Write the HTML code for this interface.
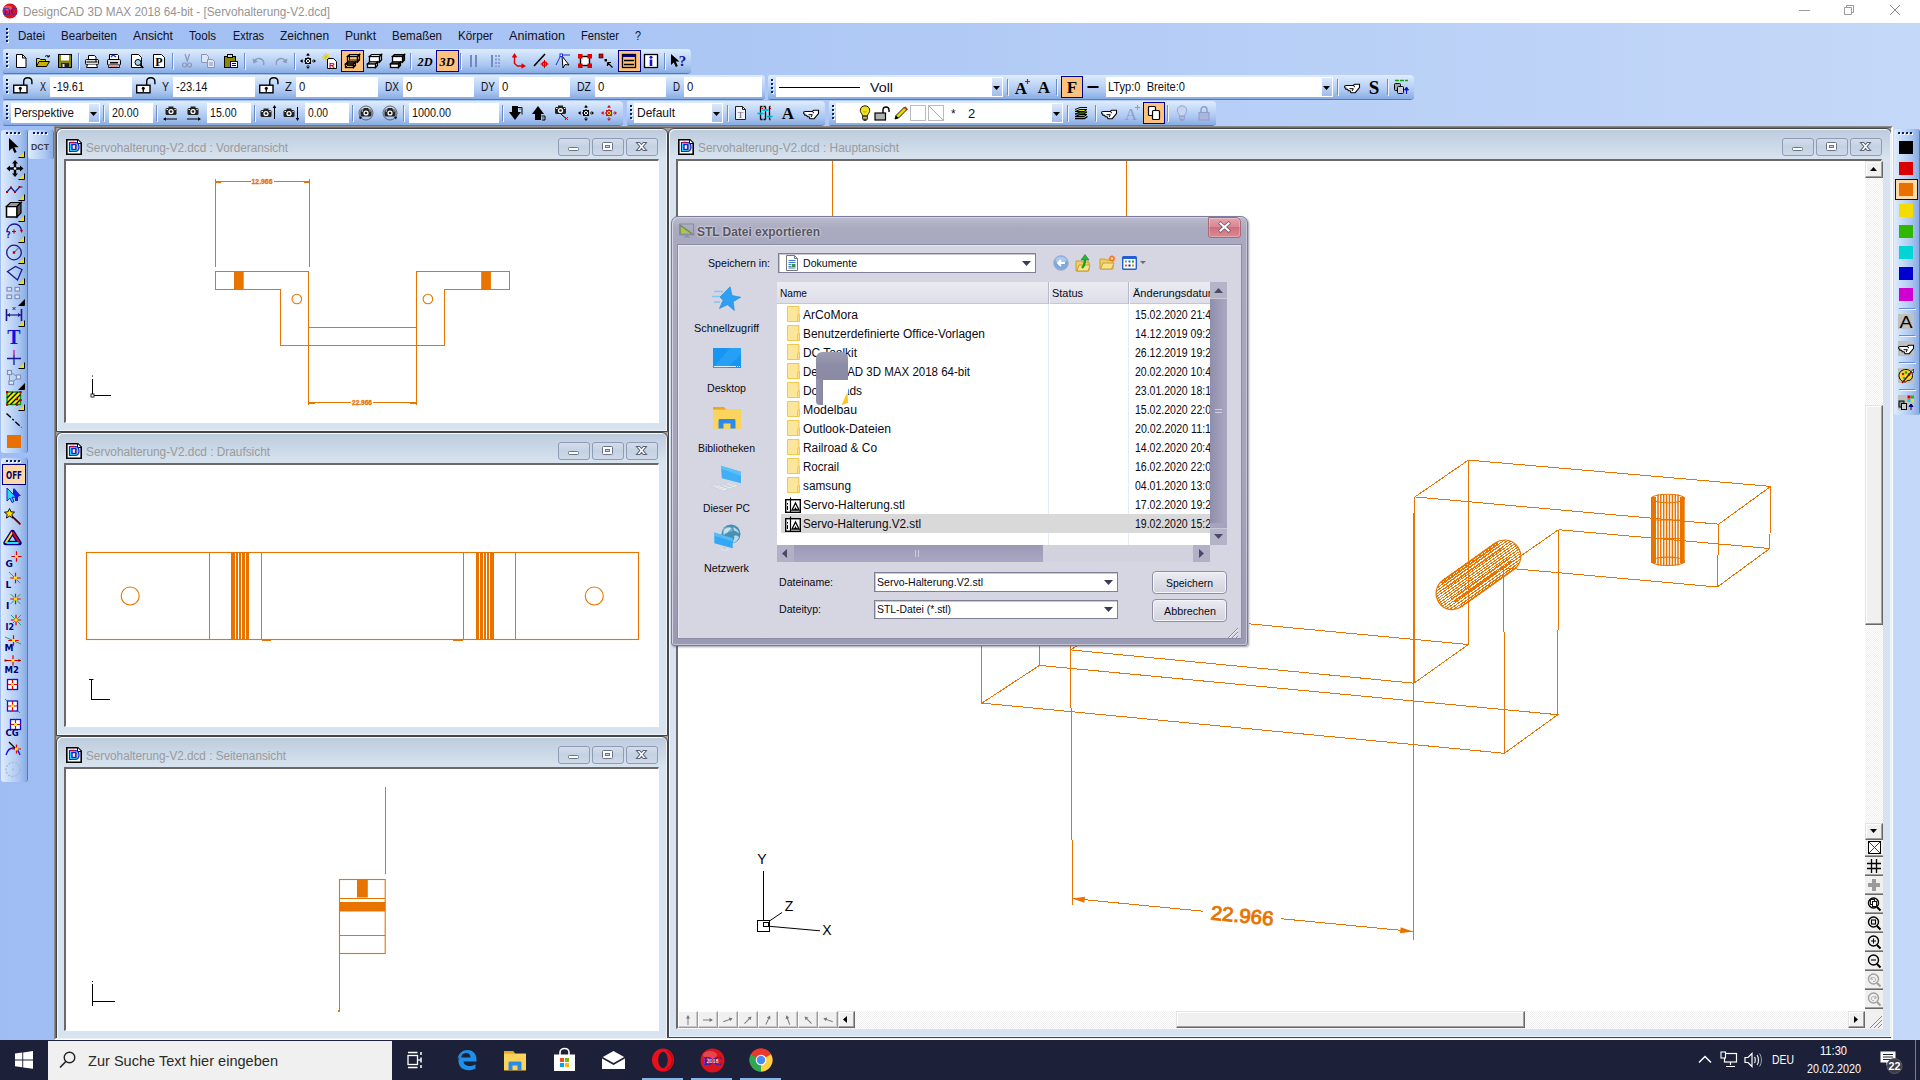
<!DOCTYPE html>
<html lang="de"><head><meta charset="utf-8"><title>DesignCAD 3D MAX 2018 64-bit - [Servohalterung-V2.dcd]</title>
<style>
html,body{margin:0;padding:0}
body{width:1920px;height:1080px;overflow:hidden;position:relative;font-family:"Liberation Sans",sans-serif;font-size:12px;
background:linear-gradient(90deg,#9fbdf3 0,#c4d8f8 100%)}
div,span.t,svg{position:absolute;box-sizing:border-box}
span.t{white-space:pre;transform-origin:0 50%;display:block}
svg{overflow:visible}
.tb{background:linear-gradient(180deg,#dfecfd 0,#c3d9f8 35%,#a9c5f0 70%,#86abe3 100%);border-radius:2px 4px 4px 2px;box-shadow:0 1px 0 #4e7ccb}
.tbv{background:linear-gradient(90deg,#dfecfd 0,#c3d9f8 35%,#a9c5f0 70%,#86abe3 100%);border-radius:3px;box-shadow:1px 0 0 #4e7ccb}
.sel{background:#ffc27c;border:1px solid #00008b}
.inp{background:#fff}
</style></head>
<body>
<!-- sec_chrome -->
<div style="left:0px;top:0px;width:1920px;height:23px;background:#fff"></div>
<svg style="left:2px;top:3px;" width="16" height="16" viewBox="0 0 16 16"><circle cx="8" cy="8" r="7.5" fill="#d8141c"/><ellipse cx="6" cy="5" rx="4" ry="2.5" fill="#f08080" opacity=".6"/><text x="8" y="11.500" font-size="10" font-family="Liberation Serif,serif" fill="#2a2ac8" text-anchor="middle" textLength="14" lengthAdjust="spacingAndGlyphs">DC</text></svg>
<span class="t" style="left:23px;top:3.5px;height:16px;line-height:16px;font-size:12px;color:#949494;transform:scaleX(0.9772);">DesignCAD 3D MAX 2018 64-bit - [Servohalterung-V2.dcd]</span>
<svg style="left:1780px;top:0px;" width="140" height="23" viewBox="0 0 140 23"><path d="M19 10.5h11" stroke="#9a9a9a" stroke-width="1" fill="none"/><path d="M64.5 7.5h7v7h-7z M66.5 7.5v-2h7v7h-2" stroke="#9a9a9a" stroke-width="1" fill="none"/><path d="M110 5l10 10M120 5l-10 10" stroke="#8a8a8a" stroke-width="1" fill="none"/></svg>
<svg style="left:6px;top:28px;" width="3" height="17" viewBox="0 0 3 17"><rect x="1" y="1" width="2" height="2" fill="#fff"/><rect x="0" y="0" width="2" height="2" fill="#0a1e6e"/><rect x="1" y="5" width="2" height="2" fill="#fff"/><rect x="0" y="4" width="2" height="2" fill="#0a1e6e"/><rect x="1" y="9" width="2" height="2" fill="#fff"/><rect x="0" y="8" width="2" height="2" fill="#0a1e6e"/><rect x="1" y="13" width="2" height="2" fill="#fff"/><rect x="0" y="12" width="2" height="2" fill="#0a1e6e"/></svg>
<span class="t" style="left:18px;top:27.5px;height:16px;line-height:16px;font-size:12px;color:#101020;transform:scaleX(0.9638);">Datei</span>
<span class="t" style="left:61px;top:27.5px;height:16px;line-height:16px;font-size:12px;color:#101020;transform:scaleX(0.9648);">Bearbeiten</span>
<span class="t" style="left:133px;top:27.5px;height:16px;line-height:16px;font-size:12px;color:#101020;transform:scaleX(1.0165);">Ansicht</span>
<span class="t" style="left:189px;top:27.5px;height:16px;line-height:16px;font-size:12px;color:#101020;transform:scaleX(0.9638);">Tools</span>
<span class="t" style="left:233px;top:27.5px;height:16px;line-height:16px;font-size:12px;color:#101020;transform:scaleX(0.9116);">Extras</span>
<span class="t" style="left:280px;top:27.5px;height:16px;line-height:16px;font-size:12px;color:#101020;transform:scaleX(0.9926);">Zeichnen</span>
<span class="t" style="left:345px;top:27.5px;height:16px;line-height:16px;font-size:12px;color:#101020;transform:scaleX(1.0102);">Punkt</span>
<span class="t" style="left:392px;top:27.5px;height:16px;line-height:16px;font-size:12px;color:#101020;transform:scaleX(0.9611);">Bemaßen</span>
<span class="t" style="left:458px;top:27.5px;height:16px;line-height:16px;font-size:12px;color:#101020;transform:scaleX(0.9717);">Körper</span>
<span class="t" style="left:509px;top:27.5px;height:16px;line-height:16px;font-size:12px;color:#101020;transform:scaleX(1.0494);">Animation</span>
<span class="t" style="left:581px;top:27.5px;height:16px;line-height:16px;font-size:12px;color:#101020;transform:scaleX(0.9341);">Fenster</span>
<span class="t" style="left:635px;top:27.5px;height:16px;line-height:16px;font-size:12px;color:#101020;transform:scaleX(0.8990);">?</span>
<div class="tb" style="left:3px;top:49px;width:688px;height:24px;"></div><svg style="left:6px;top:53px;" width="3" height="16" viewBox="0 0 3 16"><rect x="1" y="1" width="2" height="2" fill="#fff"/><rect x="0" y="0" width="2" height="2" fill="#0a1e6e"/><rect x="1" y="5" width="2" height="2" fill="#fff"/><rect x="0" y="4" width="2" height="2" fill="#0a1e6e"/><rect x="1" y="9" width="2" height="2" fill="#fff"/><rect x="0" y="8" width="2" height="2" fill="#0a1e6e"/><rect x="1" y="13" width="2" height="2" fill="#fff"/><rect x="0" y="12" width="2" height="2" fill="#0a1e6e"/></svg>
<svg style="left:13px;top:53px;" width="16" height="16" viewBox="0 0 16 16"><path d="M3.5 1.5h6l3.5 3.5v9.5h-9.5z" fill="#fff" stroke="#000"/><path d="M9.5 1.5v3.5h3.5" fill="none" stroke="#000"/></svg>
<svg style="left:35px;top:53px;" width="16" height="16" viewBox="0 0 16 16"><path d="M1.5 13.5v-8h3l1 1h5v2" fill="#e8d800" stroke="#000"/><path d="M1.5 13.5l2.5-5h10.5l-3 5z" fill="#c8b400" stroke="#000"/><path d="M10 3.5c1.5-1.5 3.5-1 4 .5m0 0l.3-2m-.3 2l-2-.3" stroke="#000" fill="none"/></svg>
<svg style="left:57px;top:53px;" width="16" height="16" viewBox="0 0 16 16"><rect x="1.5" y="1.5" width="13" height="13" fill="#8a8a00" stroke="#000"/><rect x="4" y="2" width="8" height="5.5" fill="#fff"/><rect x="4" y="10" width="8" height="4.5" fill="#222"/><rect x="5.5" y="11" width="2" height="3" fill="#ddd"/></svg>
<svg style="left:84px;top:53px;" width="16" height="16" viewBox="0 0 16 16"><path d="M4.5 6V2.5h6l1.500 1.5V6" fill="#fff" stroke="#000"/><rect x="1.500" y="6.500" width="13" height="5" rx="1" fill="#ddd" stroke="#000"/><path d="M3.500 11.500l-1 3h11l-1-3" fill="#fff" stroke="#000"/><path d="M2.500 9h11" stroke="#000"/><rect x="11" y="7.500" width="2" height="1" fill="#000"/></svg>
<svg style="left:106px;top:53px;" width="16" height="16" viewBox="0 0 16 16"><path d="M3.500 6V1.500h8l1 1V6" fill="#fff" stroke="#000"/><rect x="1.500" y="6.500" width="13" height="5.500" rx="1" fill="#ddd" stroke="#000"/><path d="M3 12l-.5 2.500h11l-.5-2.500" fill="#fff" stroke="#000"/><path d="M5 4l2-2 3 2" stroke="#1030e0" stroke-width="1.300" fill="none"/><rect x="4" y="12.500" width="8" height="1" fill="#e02020"/><rect x="4" y="9" width="8" height="1.500" fill="#000"/></svg>
<svg style="left:129px;top:53px;" width="16" height="16" viewBox="0 0 16 16"><path d="M2.500 1.500h7l3 3v10h-10z" fill="#fff" stroke="#000"/><circle cx="9" cy="9.500" r="3" fill="#9cd8f0" stroke="#000"/><path d="M11.200 11.700l3 3.300" stroke="#000" stroke-width="1.800"/></svg>
<svg style="left:151px;top:53px;" width="16" height="16" viewBox="0 0 16 16"><path d="M2.500 1.500h8l3 3v10h-11z" fill="#fff" stroke="#000"/><text x="8" y="13" font-size="12" font-weight="bold" font-family="Liberation Serif,serif" text-anchor="middle" fill="#000">P</text></svg>
<svg style="left:179px;top:53px;" width="16" height="16" viewBox="0 0 16 16"><path d="M6 1l2.500 8M10.500 1L8 9" stroke="#8a95b8" stroke-width="1.200" fill="none"/><circle cx="5.500" cy="12" r="2" fill="none" stroke="#8a95b8" stroke-width="1.200"/><circle cx="10.500" cy="12" r="2" fill="none" stroke="#8a95b8" stroke-width="1.200"/></svg>
<svg style="left:200px;top:53px;" width="16" height="16" viewBox="0 0 16 16"><path d="M1.500 1.500h5l2 2v6h-7z" fill="#dde6f5" stroke="#8a95b8"/><path d="M7.500 6.500h5l2 2v6h-7z" fill="#dde6f5" stroke="#8a95b8"/><path d="M9 10h4M9 12h4" stroke="#8a95b8"/></svg>
<svg style="left:223px;top:53px;" width="16" height="16" viewBox="0 0 16 16"><rect x="1.500" y="3.500" width="11" height="11" fill="#8a8a00" stroke="#000"/><rect x="4.500" y="1.500" width="5" height="3" fill="#ddd" stroke="#000"/><rect x="7.500" y="8.500" width="7" height="6" fill="#fff" stroke="#0000a0"/><path d="M9 10.500h4M9 12.500h4" stroke="#0000a0"/></svg>
<svg style="left:251px;top:53px;" width="16" height="16" viewBox="0 0 16 16"><path d="M3 9c1-3.500 6-5 9-1.500 1 1.500 1 3 .5 4.500" fill="none" stroke="#8a9ac0" stroke-width="1.400"/><path d="M1.500 5.500l1 5 4.500-2z" fill="#8a9ac0"/></svg>
<svg style="left:273px;top:53px;" width="16" height="16" viewBox="0 0 16 16"><path d="M13 9c-1-3.500-6-5-9-1.500-1 1.500-1 3-.5 4.500" fill="none" stroke="#8a9ac0" stroke-width="1.400"/><path d="M14.500 5.500l-1 5-4.500-2z" fill="#8a9ac0"/></svg>
<svg style="left:300px;top:53px;" width="16" height="16" viewBox="0 0 16 16"><path d="M8 0l2 2.500h-4zM8 16l2-2.500h-4zM0 8l2.500-2v4zM16 8l-2.500-2v4z" fill="#000"/><path d="M8 2v12M2 8h12" stroke="#000" stroke-dasharray="1 1"/><rect x="5.500" y="5.500" width="5" height="5" fill="#fff" stroke="#000"/><path d="M5.500 5.500l5 5M10.500 5.500l-5 5" stroke="#000" stroke-width=".8"/></svg>
<svg style="left:322px;top:53px;" width="16" height="16" viewBox="0 0 16 16"><path d="M5.500 5.500h6l3 3v7h-9z" fill="#fff" stroke="#000"/><text x="10" y="14.500" font-size="8" font-weight="bold" text-anchor="middle" fill="#e00000" font-family="Liberation Sans,sans-serif">R</text><path d="M4 0v8M0 4h8M1.200 1.200l5.600 5.600M6.800 1.200L1.200 6.800" stroke="#e8c800" stroke-width="1"/></svg>
<div style="left:78px;top:53px;width:1px;height:16px;background:#6a8ccb"></div><div style="left:79px;top:54px;width:1px;height:16px;background:#f0f6ff"></div>
<div style="left:172px;top:53px;width:1px;height:16px;background:#6a8ccb"></div><div style="left:173px;top:54px;width:1px;height:16px;background:#f0f6ff"></div>
<div style="left:244px;top:53px;width:1px;height:16px;background:#6a8ccb"></div><div style="left:245px;top:54px;width:1px;height:16px;background:#f0f6ff"></div>
<div style="left:294px;top:53px;width:1px;height:16px;background:#6a8ccb"></div><div style="left:295px;top:54px;width:1px;height:16px;background:#f0f6ff"></div>
<div style="left:410px;top:53px;width:1px;height:16px;background:#6a8ccb"></div><div style="left:411px;top:54px;width:1px;height:16px;background:#f0f6ff"></div>
<div style="left:460px;top:53px;width:1px;height:16px;background:#6a8ccb"></div><div style="left:461px;top:54px;width:1px;height:16px;background:#f0f6ff"></div>
<div style="left:664px;top:53px;width:1px;height:16px;background:#6a8ccb"></div><div style="left:665px;top:54px;width:1px;height:16px;background:#f0f6ff"></div>
<div class="sel" style="left:341px;top:50px;width:23px;height:22px;"></div>
<svg style="left:344px;top:53px;" width="16" height="16" viewBox="0 0 16 16"><path d="M3.5 3.5l2 -2h10l-2 2z" fill="none" stroke="#000" stroke-width="1.200"/><path d="M13.5 3.5l2 -2v5.5l-2 2z" fill="none" stroke="#000" stroke-width="1.200"/><rect x="3.5" y="3.5" width="10" height="5.5" fill="none" stroke="#000" stroke-width="1.300"/><path d="M3.5 9.0l2 -2h10M5.5 7.0v-5.5" fill="none" stroke="#000" stroke-width=".9"/><path d="M1.5 11l2 -2h8l-2 2z" fill="none" stroke="#000" stroke-width="1.200"/><path d="M9.5 11l2 -2v3.5l-2 2z" fill="none" stroke="#000" stroke-width="1.200"/><rect x="1.5" y="11" width="8" height="3.5" fill="none" stroke="#000" stroke-width="1.300"/><path d="M1.5 14.5l2 -2h8M3.5 12.5v-3.5" fill="none" stroke="#000" stroke-width=".9"/></svg>
<svg style="left:366px;top:53px;" width="16" height="16" viewBox="0 0 16 16"><path d="M3.5 3.5l2 -2h10l-2 2z" fill="#fff" stroke="#000" stroke-width="1.200"/><path d="M13.5 3.5l2 -2v5.5l-2 2z" fill="#fff" stroke="#000" stroke-width="1.200"/><rect x="3.5" y="3.5" width="10" height="5.5" fill="#fff" stroke="#000" stroke-width="1.300"/><path d="M1.5 11l2 -2h8l-2 2z" fill="#fff" stroke="#000" stroke-width="1.200"/><path d="M9.5 11l2 -2v3.5l-2 2z" fill="#fff" stroke="#000" stroke-width="1.200"/><rect x="1.5" y="11" width="8" height="3.5" fill="#fff" stroke="#000" stroke-width="1.300"/></svg>
<svg style="left:389px;top:53px;" width="16" height="16" viewBox="0 0 16 16"><path d="M3.5 3.5l2 -2h10l-2 2z" fill="#555" stroke="#000" stroke-width="1.200"/><path d="M13.5 3.5l2 -2v5.5l-2 2z" fill="#333" stroke="#000" stroke-width="1.200"/><rect x="3.5" y="3.5" width="10" height="5.5" fill="#fff" stroke="#000" stroke-width="1.300"/><path d="M1.5 11l2 -2h8l-2 2z" fill="#555" stroke="#000" stroke-width="1.200"/><path d="M9.5 11l2 -2v3.5l-2 2z" fill="#333" stroke="#000" stroke-width="1.200"/><rect x="1.5" y="11" width="8" height="3.5" fill="#fff" stroke="#000" stroke-width="1.300"/></svg>
<svg style="left:417px;top:53px;" width="16" height="16" viewBox="0 0 16 16"><text x="8" y="13" font-size="13" font-weight="bold" font-style="italic" font-family="Liberation Serif,serif" text-anchor="middle" fill="#000" textLength="15" lengthAdjust="spacingAndGlyphs">2D</text></svg>
<div class="sel" style="left:436px;top:50px;width:23px;height:22px;"></div>
<svg style="left:439px;top:53px;" width="16" height="16" viewBox="0 0 16 16"><text x="8" y="13" font-size="13" font-weight="bold" font-style="italic" font-family="Liberation Serif,serif" text-anchor="middle" fill="#000" textLength="15" lengthAdjust="spacingAndGlyphs">3D</text></svg>
<svg style="left:466px;top:53px;" width="16" height="16" viewBox="0 0 16 16"><path d="M5 2v12M10 2v12" stroke="#7088c4" stroke-width="2"/></svg>
<svg style="left:488px;top:53px;" width="16" height="16" viewBox="0 0 16 16"><path d="M4 2v12" stroke="#7088c4" stroke-width="2"/><path d="M8 2v12M11 2v12" stroke="#8496cc" stroke-width="1.800" stroke-dasharray="2 1.500"/></svg>
<svg style="left:510px;top:53px;" width="16" height="16" viewBox="0 0 16 16"><path d="M4.500 3v7.500l3 2.500h6" fill="none" stroke="#e00000" stroke-width="1.400"/><path d="M4.500 0l2.800 4.500h-5.600zM16 13l-4.500 2.800v-5.600z" fill="#e00000"/></svg>
<svg style="left:533px;top:53px;" width="16" height="16" viewBox="0 0 16 16"><path d="M1 13L12 1" stroke="#000" stroke-width="1.600"/><circle cx="11.500" cy="11" r="2.200" fill="none" stroke="#e00000" stroke-width="1.200"/><path d="M11.500 7v8M7.500 11h8" stroke="#e00000" stroke-width="1"/></svg>
<svg style="left:555px;top:53px;" width="16" height="16" viewBox="0 0 16 16"><path d="M7 3l7 9-4-.5-2 3.500z" fill="#fff" stroke="#000"/><path d="M1 12L6 2h9" fill="none" stroke="#2030d0" stroke-width="1"/><rect x="5" y="1" width="2.500" height="2.500" fill="#fff" stroke="#2030d0"/></svg>
<svg style="left:577px;top:53px;" width="16" height="16" viewBox="0 0 16 16"><rect x="3.500" y="3.500" width="9" height="9" fill="#fff" stroke="#000" stroke-width="1.400"/><rect x="1" y="1" width="4.500" height="4.500" fill="#e00000"/><rect x="10.500" y="1" width="4.500" height="4.500" fill="#e00000"/><rect x="1" y="10.500" width="4.500" height="4.500" fill="#e00000"/><rect x="10.500" y="10.500" width="4.500" height="4.500" fill="#e00000"/></svg>
<svg style="left:598px;top:53px;" width="16" height="16" viewBox="0 0 16 16"><rect x="1" y="1" width="4" height="4" fill="#e00000" stroke="#000" stroke-width=".6"/><rect x="6.500" y="6" width="2.500" height="2.500" fill="#000"/><path d="M9.500 9.500l5 5M9.500 9.500v3.500M9.500 9.500h3.500" stroke="#000" stroke-width="1.200" fill="none"/></svg>
<div class="sel" style="left:618px;top:50px;width:23px;height:22px;"></div>
<svg style="left:621px;top:53px;" width="16" height="16" viewBox="0 0 16 16"><rect x="1.500" y="1.500" width="13" height="13" fill="#ffc27c" stroke="#000" stroke-width="1.300"/><rect x="1.500" y="1.500" width="13" height="2.500" fill="#00008b"/><path d="M3 7.500h10M3 11.500h10" stroke="#000" stroke-width="1.600"/></svg>
<svg style="left:643px;top:53px;" width="16" height="16" viewBox="0 0 16 16"><rect x="1.500" y="1.500" width="13" height="13" fill="#fff" stroke="#000" stroke-width="1.300"/><rect x="6.700" y="6.500" width="2.600" height="6.500" fill="#1010e0"/><circle cx="8" cy="4.300" r="1.500" fill="#1010e0"/></svg>
<svg style="left:670px;top:53px;" width="16" height="16" viewBox="0 0 16 16"><path d="M1 1l0 11 2.800-2.600 2 4.600 2-1-2-4.400h3.700z" fill="#000"/><text x="12.500" y="12.500" font-size="15" font-weight="bold" font-family="Liberation Serif,serif" text-anchor="middle" fill="#101098">?</text></svg>
<div class="tb" style="left:3px;top:75px;width:762px;height:24px;"></div><svg style="left:6px;top:79px;" width="3" height="16" viewBox="0 0 3 16"><rect x="1" y="1" width="2" height="2" fill="#fff"/><rect x="0" y="0" width="2" height="2" fill="#0a1e6e"/><rect x="1" y="5" width="2" height="2" fill="#fff"/><rect x="0" y="4" width="2" height="2" fill="#0a1e6e"/><rect x="1" y="9" width="2" height="2" fill="#fff"/><rect x="0" y="8" width="2" height="2" fill="#0a1e6e"/><rect x="1" y="13" width="2" height="2" fill="#fff"/><rect x="0" y="12" width="2" height="2" fill="#0a1e6e"/></svg>
<svg style="left:13px;top:77px;" width="20" height="17" viewBox="0 0 20 17"><rect x=".7" y="8.200" width="13.300" height="7.600" fill="#fff" stroke="#000" stroke-width="1.400"/><path d="M10.700 8V4.600c0-2.600 1.500-3.800 4.100-3.800s4.100 1.200 4.100 3.800V7.200" fill="none" stroke="#000" stroke-width="1.400"/><circle cx="7.300" cy="11.200" r="1.500" fill="#000"/><rect x="6.600" y="11.500" width="1.400" height="3.300" fill="#000"/></svg>
<span class="t" style="left:40px;top:79.0px;height:16px;line-height:16px;font-size:12px;color:#101020;transform:scaleX(0.7496);">X</span>
<div style="left:50px;top:77px;width:82px;height:20px;background:#fff"></div>
<span class="t" style="left:53px;top:79.0px;height:16px;line-height:16px;font-size:12px;color:#101020;transform:scaleX(0.9111);">-19.61</span>
<svg style="left:136px;top:77px;" width="20" height="17" viewBox="0 0 20 17"><rect x=".7" y="8.200" width="13.300" height="7.600" fill="#fff" stroke="#000" stroke-width="1.400"/><path d="M10.700 8V4.600c0-2.600 1.500-3.800 4.100-3.800s4.100 1.200 4.100 3.800V7.200" fill="none" stroke="#000" stroke-width="1.400"/><circle cx="7.300" cy="11.200" r="1.500" fill="#000"/><rect x="6.600" y="11.500" width="1.400" height="3.300" fill="#000"/></svg>
<span class="t" style="left:162px;top:79.0px;height:16px;line-height:16px;font-size:12px;color:#101020;transform:scaleX(0.8746);">Y</span>
<div style="left:173px;top:77px;width:82px;height:20px;background:#fff"></div>
<span class="t" style="left:176px;top:79.0px;height:16px;line-height:16px;font-size:12px;color:#101020;transform:scaleX(0.9258);">-23.14</span>
<svg style="left:259px;top:77px;" width="20" height="17" viewBox="0 0 20 17"><rect x=".7" y="8.200" width="13.300" height="7.600" fill="#fff" stroke="#000" stroke-width="1.400"/><path d="M10.700 8V4.600c0-2.600 1.500-3.800 4.100-3.800s4.100 1.200 4.100 3.800V7.200" fill="none" stroke="#000" stroke-width="1.400"/><circle cx="7.300" cy="11.200" r="1.500" fill="#000"/><rect x="6.600" y="11.500" width="1.400" height="3.300" fill="#000"/></svg>
<span class="t" style="left:285px;top:79.0px;height:16px;line-height:16px;font-size:12px;color:#101020;transform:scaleX(0.9550);">Z</span>
<div style="left:296px;top:77px;width:82px;height:20px;background:#fff"></div>
<span class="t" style="left:299px;top:79.0px;height:16px;line-height:16px;font-size:12px;color:#101020;transform:scaleX(0.9440);">0</span>
<span class="t" style="left:385px;top:79.0px;height:16px;line-height:16px;font-size:12px;color:#101020;transform:scaleX(0.8398);">DX</span>
<div style="left:403px;top:77px;width:71px;height:20px;background:#fff"></div>
<span class="t" style="left:406px;top:79.0px;height:16px;line-height:16px;font-size:12px;color:#101020;transform:scaleX(0.9440);">0</span>
<span class="t" style="left:481px;top:79.0px;height:16px;line-height:16px;font-size:12px;color:#101020;transform:scaleX(0.8398);">DY</span>
<div style="left:499px;top:77px;width:71px;height:20px;background:#fff"></div>
<span class="t" style="left:502px;top:79.0px;height:16px;line-height:16px;font-size:12px;color:#101020;transform:scaleX(0.9440);">0</span>
<span class="t" style="left:577px;top:79.0px;height:16px;line-height:16px;font-size:12px;color:#101020;transform:scaleX(0.8752);">DZ</span>
<div style="left:595px;top:77px;width:71px;height:20px;background:#fff"></div>
<span class="t" style="left:598px;top:79.0px;height:16px;line-height:16px;font-size:12px;color:#101020;transform:scaleX(0.9440);">0</span>
<span class="t" style="left:673px;top:79.0px;height:16px;line-height:16px;font-size:12px;color:#101020;transform:scaleX(0.8078);">D</span>
<div style="left:684px;top:77px;width:78px;height:20px;background:#fff"></div>
<span class="t" style="left:687px;top:79.0px;height:16px;line-height:16px;font-size:12px;color:#101020;transform:scaleX(0.9440);">0</span>
<div class="tb" style="left:768px;top:75px;width:646px;height:24px;"></div><svg style="left:771px;top:79px;" width="3" height="16" viewBox="0 0 3 16"><rect x="1" y="1" width="2" height="2" fill="#fff"/><rect x="0" y="0" width="2" height="2" fill="#0a1e6e"/><rect x="1" y="5" width="2" height="2" fill="#fff"/><rect x="0" y="4" width="2" height="2" fill="#0a1e6e"/><rect x="1" y="9" width="2" height="2" fill="#fff"/><rect x="0" y="8" width="2" height="2" fill="#0a1e6e"/><rect x="1" y="13" width="2" height="2" fill="#fff"/><rect x="0" y="12" width="2" height="2" fill="#0a1e6e"/></svg>
<div style="left:776px;top:77px;width:227px;height:20px;background:#fff"></div><div style="left:991px;top:78px;width:11px;height:18px;background:linear-gradient(180deg,#dce8fb,#9fbdee);border-left:1px solid #fff"></div><svg style="left:993px;top:86px;" width="7" height="4" viewBox="0 0 7 4"><path d="M0 0h7l-3.500 4z" fill="#000"/></svg>
<div style="left:779px;top:87px;width:81px;height:1px;background:#000"></div>
<span class="t" style="left:870px;top:79.0px;height:17px;line-height:17px;font-size:13px;color:#101020;transform:scaleX(1.0972);">Voll</span>
<div style="left:1007px;top:79px;width:1px;height:16px;background:#6a8ccb"></div><div style="left:1008px;top:80px;width:1px;height:16px;background:#f0f6ff"></div>
<svg style="left:1014px;top:79px;" width="16" height="16" viewBox="0 0 16 16"><text x="7" y="14.500" font-size="17" font-weight="bold" font-family="Liberation Serif,serif" text-anchor="middle" fill="#000">A</text><path d="M11 2.500h5M13.500 0v5" stroke="#e00000" stroke-width="1.200"/></svg>
<svg style="left:1036px;top:79px;" width="16" height="16" viewBox="0 0 16 16"><text x="8" y="14" font-size="17" font-weight="bold" font-family="Liberation Serif,serif" text-anchor="middle" fill="#000">A</text></svg>
<div style="left:1056px;top:79px;width:1px;height:16px;background:#6a8ccb"></div><div style="left:1057px;top:80px;width:1px;height:16px;background:#f0f6ff"></div>
<div class="sel" style="left:1061px;top:76px;width:22px;height:22px;"></div>
<svg style="left:1064px;top:79px;" width="16" height="16" viewBox="0 0 16 16"><text x="8" y="14" font-size="17" font-weight="bold" font-family="Liberation Serif,serif" text-anchor="middle" fill="#000">F</text></svg>
<svg style="left:1085px;top:79px;" width="16" height="16" viewBox="0 0 16 16"><rect x="2.500" y="7" width="11" height="2" fill="#000"/></svg>
<div style="left:1106px;top:77px;width:227px;height:20px;background:#fff"></div><div style="left:1321px;top:78px;width:11px;height:18px;background:linear-gradient(180deg,#dce8fb,#9fbdee);border-left:1px solid #fff"></div><svg style="left:1323px;top:86px;" width="7" height="4" viewBox="0 0 7 4"><path d="M0 0h7l-3.500 4z" fill="#000"/></svg>
<span class="t" style="left:1108px;top:79.0px;height:16px;line-height:16px;font-size:12px;color:#101020;transform:scaleX(0.9260);">LTyp:0  Breite:0</span>
<div style="left:1337px;top:79px;width:1px;height:16px;background:#6a8ccb"></div><div style="left:1338px;top:80px;width:1px;height:16px;background:#f0f6ff"></div>
<svg style="left:1344px;top:80px;" width="16" height="16" viewBox="0 0 16 16"><path d="M.6 6.800c0-.9.500-1.300 1.400-1.300h7.200l1.600-1.300h4.700v3.300l-4.300 5.200h-4.200l-1-2h-1.700l-.6-1.500h-1.900v-1.200h-.7c-.4 0-.5-.4-.5-1.200z" fill="#fff" stroke="#000" stroke-width="1.100"/><path d="M5.500 8.700h3.800l-1.300 2.500M9.200 5.600l1.800 1.500" fill="none" stroke="#000" stroke-width="1"/></svg>
<svg style="left:1366px;top:79px;" width="16" height="16" viewBox="0 0 16 16"><text x="8" y="14.500" font-size="19" font-weight="bold" font-family="Liberation Serif,serif" text-anchor="middle" fill="#000">S</text></svg>
<div style="left:1387px;top:79px;width:1px;height:16px;background:#6a8ccb"></div><div style="left:1388px;top:80px;width:1px;height:16px;background:#f0f6ff"></div>
<svg style="left:1393px;top:79px;" width="16" height="16" viewBox="0 0 16 16"><rect x="1.500" y="4.500" width="6" height="7" rx="1" fill="#9aa" stroke="#000"/><rect x="4.500" y="7.500" width="6" height="7" rx="1" fill="#ccd" stroke="#000"/><path d="M2 1.500h4M7 1.500h4M12 1.500h3" stroke="#10a010" stroke-width="1.600"/><path d="M13.500 15V10M13.500 8l-2 3h4z" stroke="#1010d0" fill="#1010d0"/></svg>
<div class="tb" style="left:3px;top:101px;width:620px;height:24px;"></div><svg style="left:6px;top:105px;" width="3" height="16" viewBox="0 0 3 16"><rect x="1" y="1" width="2" height="2" fill="#fff"/><rect x="0" y="0" width="2" height="2" fill="#0a1e6e"/><rect x="1" y="5" width="2" height="2" fill="#fff"/><rect x="0" y="4" width="2" height="2" fill="#0a1e6e"/><rect x="1" y="9" width="2" height="2" fill="#fff"/><rect x="0" y="8" width="2" height="2" fill="#0a1e6e"/><rect x="1" y="13" width="2" height="2" fill="#fff"/><rect x="0" y="12" width="2" height="2" fill="#0a1e6e"/></svg>
<div style="left:11px;top:103px;width:89px;height:20px;background:#fff"></div><div style="left:88px;top:104px;width:11px;height:18px;background:linear-gradient(180deg,#dce8fb,#9fbdee);border-left:1px solid #fff"></div><svg style="left:90px;top:112px;" width="7" height="4" viewBox="0 0 7 4"><path d="M0 0h7l-3.500 4z" fill="#000"/></svg>
<span class="t" style="left:14px;top:105.0px;height:16px;line-height:16px;font-size:12px;color:#101020;transform:scaleX(0.9570);">Perspektive</span>
<div style="left:103px;top:105px;width:1px;height:16px;background:#6a8ccb"></div><div style="left:104px;top:106px;width:1px;height:16px;background:#f0f6ff"></div>
<div style="left:109px;top:103px;width:44px;height:20px;background:#fff"></div>
<span class="t" style="left:112px;top:105.0px;height:16px;line-height:16px;font-size:12px;color:#101020;transform:scaleX(0.8858);">20.00</span>
<div style="left:207px;top:103px;width:44px;height:20px;background:#fff"></div>
<span class="t" style="left:210px;top:105.0px;height:16px;line-height:16px;font-size:12px;color:#101020;transform:scaleX(0.8858);">15.00</span>
<div style="left:305px;top:103px;width:44px;height:20px;background:#fff"></div>
<span class="t" style="left:308px;top:105.0px;height:16px;line-height:16px;font-size:12px;color:#101020;transform:scaleX(0.8563);">0.00</span>
<div style="left:409px;top:103px;width:90px;height:20px;background:#fff"></div>
<span class="t" style="left:412px;top:105.0px;height:16px;line-height:16px;font-size:12px;color:#101020;transform:scaleX(0.8991);">1000.00</span>
<div style="left:156px;top:105px;width:1px;height:16px;background:#6a8ccb"></div><div style="left:157px;top:106px;width:1px;height:16px;background:#f0f6ff"></div>
<div style="left:254px;top:105px;width:1px;height:16px;background:#6a8ccb"></div><div style="left:255px;top:106px;width:1px;height:16px;background:#f0f6ff"></div>
<div style="left:352px;top:105px;width:1px;height:16px;background:#6a8ccb"></div><div style="left:353px;top:106px;width:1px;height:16px;background:#f0f6ff"></div>
<div style="left:403px;top:105px;width:1px;height:16px;background:#6a8ccb"></div><div style="left:404px;top:106px;width:1px;height:16px;background:#f0f6ff"></div>
<div style="left:502px;top:105px;width:1px;height:16px;background:#6a8ccb"></div><div style="left:503px;top:106px;width:1px;height:16px;background:#f0f6ff"></div>
<svg style="left:163px;top:105px;" width="16" height="16" viewBox="0 0 16 16"><g transform="translate(0.5,-2)"><rect x="2" y="5" width="11" height="7" rx="1.5" fill="#222"/><rect x="5" y="3.5" width="5" height="2" fill="#222"/><circle cx="7.5" cy="8.5" r="2.6" fill="#fff"/><circle cx="7.5" cy="8.5" r="1.3" fill="#222"/><rect x="3" y="6" width="1.5" height="1" fill="#fff"/><rect x="11" y="6" width="1.2" height="1" fill="#fff"/></g><path d="M1 14h13" stroke="#000"/><path d="M0 14l3-1.800v3.600z" fill="#000"/></svg>
<svg style="left:185px;top:105px;" width="16" height="16" viewBox="0 0 16 16"><g transform="translate(0.5,-2)"><rect x="2" y="5" width="11" height="7" rx="1.5" fill="#222"/><rect x="5" y="3.5" width="5" height="2" fill="#222"/><circle cx="7.5" cy="8.5" r="2.6" fill="#fff"/><circle cx="7.5" cy="8.5" r="1.3" fill="#222"/><rect x="3" y="6" width="1.5" height="1" fill="#fff"/><rect x="11" y="6" width="1.2" height="1" fill="#fff"/></g><path d="M2 14h13" stroke="#000"/><path d="M16 14l-3-1.800v3.600z" fill="#000"/></svg>
<svg style="left:260px;top:105px;" width="16" height="16" viewBox="0 0 16 16"><g transform="translate(-1.5,0)"><rect x="2" y="5" width="11" height="7" rx="1.5" fill="#222"/><rect x="5" y="3.5" width="5" height="2" fill="#222"/><circle cx="7.5" cy="8.5" r="2.6" fill="#fff"/><circle cx="7.5" cy="8.5" r="1.3" fill="#222"/><rect x="3" y="6" width="1.5" height="1" fill="#fff"/><rect x="11" y="6" width="1.2" height="1" fill="#fff"/></g><path d="M14.500 14V2" stroke="#000"/><path d="M14.500 0l-1.800 3h3.600z" fill="#000"/></svg>
<svg style="left:283px;top:105px;" width="16" height="16" viewBox="0 0 16 16"><g transform="translate(-1.5,0)"><rect x="2" y="5" width="11" height="7" rx="1.5" fill="#222"/><rect x="5" y="3.5" width="5" height="2" fill="#222"/><circle cx="7.5" cy="8.5" r="2.6" fill="#fff"/><circle cx="7.5" cy="8.5" r="1.3" fill="#222"/><rect x="3" y="6" width="1.5" height="1" fill="#fff"/><rect x="11" y="6" width="1.2" height="1" fill="#fff"/></g><path d="M14.500 2v12" stroke="#000"/><path d="M14.500 16l-1.800-3h3.600z" fill="#000"/></svg>
<svg style="left:358px;top:105px;" width="16" height="16" viewBox="0 0 16 16"><circle cx="8" cy="8" r="7" fill="none" stroke="#555" stroke-width=".9"/><g transform="translate(0.5,-0.5)"><rect x="2" y="5" width="11" height="7" rx="1.5" fill="#222"/><rect x="5" y="3.5" width="5" height="2" fill="#222"/><circle cx="7.5" cy="8.5" r="2.6" fill="#fff"/><circle cx="7.5" cy="8.5" r="1.3" fill="#222"/><rect x="3" y="6" width="1.5" height="1" fill="#fff"/><rect x="11" y="6" width="1.2" height="1" fill="#fff"/></g><path d="M1 11.500l3 .5-2 2.500z" fill="#000"/></svg>
<svg style="left:382px;top:105px;" width="16" height="16" viewBox="0 0 16 16"><circle cx="8" cy="8" r="7" fill="none" stroke="#555" stroke-width=".9"/><g transform="translate(0.5,-0.5)"><rect x="2" y="5" width="11" height="7" rx="1.5" fill="#222"/><rect x="5" y="3.5" width="5" height="2" fill="#222"/><circle cx="7.5" cy="8.5" r="2.6" fill="#fff"/><circle cx="7.5" cy="8.5" r="1.3" fill="#222"/><rect x="3" y="6" width="1.5" height="1" fill="#fff"/><rect x="11" y="6" width="1.2" height="1" fill="#fff"/></g><path d="M15 11.500l-3 .5 2 2.500z" fill="#000"/></svg>
<svg style="left:508px;top:105px;" width="16" height="16" viewBox="0 0 16 16"><path d="M4 1h6v6h3l-6 8-6-8h3z" fill="#000"/><path d="M10 2.500h4v7M11.500 4h1" stroke="#000" fill="none"/></svg>
<svg style="left:531px;top:105px;" width="16" height="16" viewBox="0 0 16 16"><path d="M4 15h6V9h3L7 1 1 9h3z" fill="#000"/><path d="M10.500 11h3.500v4h-3" stroke="#000" fill="none"/><path d="M11 13h4" stroke="#555"/></svg>
<svg style="left:553px;top:105px;" width="16" height="16" viewBox="0 0 16 16"><g transform="translate(0,-3)"><rect x="2" y="5" width="11" height="7" rx="1.5" fill="#222"/><rect x="5" y="3.5" width="5" height="2" fill="#222"/><circle cx="7.5" cy="8.5" r="2.6" fill="#fff"/><circle cx="7.5" cy="8.5" r="1.3" fill="#222"/><rect x="3" y="6" width="1.5" height="1" fill="#fff"/><rect x="11" y="6" width="1.2" height="1" fill="#fff"/></g><path d="M8 9l5 4.500" stroke="#000"/><path d="M12 12l3 3M15 12l-3 3" stroke="#e00000" stroke-width="1"/></svg>
<svg style="left:578px;top:105px;" width="16" height="16" viewBox="0 0 16 16"><path d="M8 0l2 2.500h-4zM8 16l2-2.500h-4zM0 8l2.500-2v4zM16 8l-2.500-2v4z" fill="#000"/><path d="M8 2v12M2 8h12" stroke="#000" stroke-dasharray="1 1"/><rect x="5.500" y="5.500" width="5" height="5" fill="#fff" stroke="#000"/><path d="M5.500 5.500l5 5M10.500 5.500l-5 5" stroke="#000" stroke-width=".8"/></svg>
<svg style="left:601px;top:105px;" width="16" height="16" viewBox="0 0 16 16"><path d="M8 0l2 2.500h-4zM8 16l2-2.500h-4zM0 8l2.500-2v4zM16 8l-2.500-2v4z" fill="#d01010"/><path d="M8 2v12M2 8h12" stroke="#d01010" stroke-dasharray="1 1"/><rect x="5.500" y="5.500" width="5" height="5" fill="#ffe000" stroke="#d01010"/><path d="M5.500 5.500l5 5M10.500 5.500l-5 5" stroke="#d01010" stroke-width=".8"/></svg>
<div class="tb" style="left:627px;top:101px;width:198px;height:24px;"></div><svg style="left:630px;top:105px;" width="3" height="16" viewBox="0 0 3 16"><rect x="1" y="1" width="2" height="2" fill="#fff"/><rect x="0" y="0" width="2" height="2" fill="#0a1e6e"/><rect x="1" y="5" width="2" height="2" fill="#fff"/><rect x="0" y="4" width="2" height="2" fill="#0a1e6e"/><rect x="1" y="9" width="2" height="2" fill="#fff"/><rect x="0" y="8" width="2" height="2" fill="#0a1e6e"/><rect x="1" y="13" width="2" height="2" fill="#fff"/><rect x="0" y="12" width="2" height="2" fill="#0a1e6e"/></svg>
<div style="left:634px;top:103px;width:89px;height:20px;background:#fff"></div><div style="left:711px;top:104px;width:11px;height:18px;background:linear-gradient(180deg,#dce8fb,#9fbdee);border-left:1px solid #fff"></div><svg style="left:713px;top:112px;" width="7" height="4" viewBox="0 0 7 4"><path d="M0 0h7l-3.500 4z" fill="#000"/></svg>
<span class="t" style="left:637px;top:105.0px;height:16px;line-height:16px;font-size:12px;color:#101020;transform:scaleX(0.9994);">Default</span>
<div style="left:727px;top:105px;width:1px;height:16px;background:#6a8ccb"></div><div style="left:728px;top:106px;width:1px;height:16px;background:#f0f6ff"></div>
<svg style="left:733px;top:105px;" width="16" height="16" viewBox="0 0 16 16"><path d="M2.500 1.500h7l3 3v10h-10z" fill="#eef2fa" stroke="#222"/><path d="M9.500 1.500v3h3" fill="none" stroke="#222"/><text x="7.500" y="13" font-size="9" font-family="Liberation Serif,serif" text-anchor="middle" fill="#556">T</text></svg>
<svg style="left:757px;top:105px;" width="16" height="16" viewBox="0 0 16 16"><path d="M3.500 1.500v13M8.500 1.500v13M12.500 1.500v13M3.500 1.500h2M3.500 14.500h2M8.500 1.500h-2M8.500 14.500h-2M12.500 1.500h1M12.500 14.500h1" stroke="#000" stroke-width="1.300" fill="none"/><path d="M4.500 3.500h1.500M13 3.500h1" stroke="#e00000" stroke-width="1.200"/><path d="M1 8.500h5M6 5h5M10 11.500h5" stroke="#00d8e8" stroke-width="2" stroke-linecap="round"/><path d="M1.500 8.500h4M6.500 5h4M10.500 11.500h4" stroke="#000" stroke-width=".5" fill="none" opacity=".5"/></svg>
<svg style="left:780px;top:105px;" width="16" height="16" viewBox="0 0 16 16"><text x="8" y="14" font-size="17" font-weight="bold" font-family="Liberation Serif,serif" text-anchor="middle" fill="#000">A</text></svg>
<svg style="left:803px;top:106px;" width="16" height="16" viewBox="0 0 16 16"><path d="M.6 6.800c0-.9.500-1.300 1.400-1.300h7.200l1.600-1.300h4.700v3.300l-4.300 5.200h-4.200l-1-2h-1.700l-.6-1.500h-1.900v-1.200h-.7c-.4 0-.5-.4-.5-1.200z" fill="#fff" stroke="#000" stroke-width="1.100"/><path d="M5.500 8.700h3.800l-1.300 2.500M9.200 5.600l1.800 1.500" fill="none" stroke="#000" stroke-width="1"/></svg>
<div class="tb" style="left:829px;top:101px;width:387px;height:24px;"></div><svg style="left:832px;top:105px;" width="3" height="16" viewBox="0 0 3 16"><rect x="1" y="1" width="2" height="2" fill="#fff"/><rect x="0" y="0" width="2" height="2" fill="#0a1e6e"/><rect x="1" y="5" width="2" height="2" fill="#fff"/><rect x="0" y="4" width="2" height="2" fill="#0a1e6e"/><rect x="1" y="9" width="2" height="2" fill="#fff"/><rect x="0" y="8" width="2" height="2" fill="#0a1e6e"/><rect x="1" y="13" width="2" height="2" fill="#fff"/><rect x="0" y="12" width="2" height="2" fill="#0a1e6e"/></svg>
<div style="left:836px;top:103px;width:227px;height:20px;background:#fff"></div><div style="left:1051px;top:104px;width:11px;height:18px;background:linear-gradient(180deg,#dce8fb,#9fbdee);border-left:1px solid #fff"></div><svg style="left:1053px;top:112px;" width="7" height="4" viewBox="0 0 7 4"><path d="M0 0h7l-3.500 4z" fill="#000"/></svg>
<svg style="left:857px;top:105px;" width="16" height="16" viewBox="0 0 16 16"><path d="M8 .8c-3 0-4.700 2.200-4.700 4.500 0 2 1.200 3 1.800 4.200.3.700.4 1.500.4 1.500h5s.1-.8.400-1.500c.6-1.200 1.800-2.200 1.800-4.200C12.700 3 11 .8 8 .8z" fill="#f0e020" stroke="#000" stroke-width=".9"/><rect x="5.700" y="11.200" width="4.600" height="3" fill="#c8c060" stroke="#000" stroke-width=".8"/><path d="M6.500 15.200h3" stroke="#000" stroke-width="1.200"/><path d="M6.500 6l1.500 1.500L9.500 6" fill="none" stroke="#a08000" stroke-width=".7"/></svg>
<svg style="left:874px;top:105px;" width="16" height="16" viewBox="0 0 16 16"><rect x="1" y="8" width="10.500" height="7" fill="#b0b0b0" stroke="#000" stroke-width="1.200"/><path d="M9 8V5c0-2 1.200-3 3-3s3 1 3 3v2" fill="none" stroke="#000" stroke-width="1.400"/></svg>
<svg style="left:893px;top:105px;" width="16" height="16" viewBox="0 0 16 16"><path d="M2 14l1-3.500L11.500 2l2.500 2.500L5.500 13z" fill="#e8d800" stroke="#000" stroke-width=".9"/><path d="M2 14l1-3.500 2.500 2.500z" fill="#000"/><path d="M11.500 2l2.500 2.500" stroke="#c03030" stroke-width="2"/></svg>
<svg style="left:910px;top:105px;" width="16" height="16" viewBox="0 0 16 16"><rect x=".5" y=".5" width="15" height="15" fill="#fff" stroke="#bbb"/></svg>
<svg style="left:928px;top:105px;" width="16" height="16" viewBox="0 0 16 16"><rect x=".5" y=".5" width="15" height="15" fill="#fff" stroke="#bbb"/><path d="M1 1l14 14" stroke="#aaa"/></svg>
<span class="t" style="left:951px;top:106.0px;height:16px;line-height:16px;font-size:12px;color:#101020;">*</span>
<span class="t" style="left:968px;top:105.0px;height:17px;line-height:17px;font-size:13px;color:#101020;">2</span>
<div style="left:1067px;top:105px;width:1px;height:16px;background:#6a8ccb"></div><div style="left:1068px;top:106px;width:1px;height:16px;background:#f0f6ff"></div>
<svg style="left:1073px;top:105px;" width="16" height="16" viewBox="0 0 16 16"><path d="M2 11.500l5-2h7l-3 2z" fill="#20c0e0" stroke="#000"/><path d="M2 9l5-2h7l-3 2z" fill="#30b030" stroke="#000"/><path d="M2 6.500l5-2h7l-3 2z" fill="#e8e000" stroke="#000"/><path d="M2 13.500h9.500l3-2" fill="none" stroke="#000" stroke-width="1.300"/><path d="M2 4.500l5-2h7" fill="none" stroke="#000"/></svg>
<div style="left:1095px;top:105px;width:1px;height:16px;background:#6a8ccb"></div><div style="left:1096px;top:106px;width:1px;height:16px;background:#f0f6ff"></div>
<svg style="left:1101px;top:106px;" width="16" height="16" viewBox="0 0 16 16"><path d="M.6 6.800c0-.9.500-1.300 1.400-1.300h7.200l1.600-1.300h4.700v3.300l-4.300 5.200h-4.200l-1-2h-1.700l-.6-1.500h-1.900v-1.200h-.7c-.4 0-.5-.4-.5-1.200z" fill="#fff" stroke="#000" stroke-width="1.100"/><path d="M5.500 8.700h3.800l-1.300 2.500M9.200 5.600l1.800 1.500" fill="none" stroke="#000" stroke-width="1"/></svg>
<svg style="left:1124px;top:105px;" width="16" height="16" viewBox="0 0 16 16"><text x="7" y="14.500" font-size="17" font-family="Liberation Serif,serif" text-anchor="middle" fill="#8e9cc8">A</text><path d="M11 2.500h5M13.500 0v5" stroke="#8e9cc8" stroke-width="1"/></svg>
<div class="sel" style="left:1143px;top:102px;width:22px;height:22px;"></div>
<svg style="left:1146px;top:105px;" width="16" height="16" viewBox="0 0 16 16"><rect x="2.500" y="1.500" width="7" height="9" rx="1" fill="#fff" stroke="#000" stroke-width="1.200"/><rect x="6.500" y="5.500" width="7" height="9" rx="1" fill="#fff" stroke="#000" stroke-width="1.200"/></svg>
<div style="left:1167px;top:105px;width:1px;height:16px;background:#6a8ccb"></div><div style="left:1168px;top:106px;width:1px;height:16px;background:#f0f6ff"></div>
<svg style="left:1174px;top:105px;" width="16" height="16" viewBox="0 0 16 16"><path d="M8 .8c-3 0-4.700 2.200-4.700 4.500 0 2 1.200 3 1.800 4.200.3.700.4 1.500.4 1.500h5s.1-.8.400-1.500c.6-1.200 1.800-2.200 1.800-4.200C12.700 3 11 .8 8 .8z" fill="#c8d4ee" stroke="#8e9cc8" stroke-width=".9"/><rect x="5.700" y="11.200" width="4.600" height="3" fill="#b0bce0" stroke="#8e9cc8" stroke-width=".8"/><path d="M6.500 15.200h3" stroke="#8e9cc8" stroke-width="1.200"/></svg>
<svg style="left:1196px;top:105px;" width="16" height="16" viewBox="0 0 16 16"><rect x="3" y="7.500" width="10" height="7.500" fill="#aab6dc" stroke="#8e9cc8" stroke-width="1"/><path d="M5 7.500V5c0-2 1.200-3.200 3-3.200s3 1.200 3 3.200v2.500" fill="none" stroke="#8e9cc8" stroke-width="1.500"/></svg>
<!-- sec_left -->
<div class="tbv" style="left:1px;top:130px;width:26px;height:323px;"></div>
<svg style="left:6px;top:132px;" width="16" height="3" viewBox="0 0 16 3"><rect x="1" y="1" width="2" height="2" fill="#fff"/><rect x="0" y="0" width="2" height="2" fill="#0a1e6e"/><rect x="5" y="1" width="2" height="2" fill="#fff"/><rect x="4" y="0" width="2" height="2" fill="#0a1e6e"/><rect x="9" y="1" width="2" height="2" fill="#fff"/><rect x="8" y="0" width="2" height="2" fill="#0a1e6e"/><rect x="13" y="1" width="2" height="2" fill="#fff"/><rect x="12" y="0" width="2" height="2" fill="#0a1e6e"/></svg>
<svg style="left:4px;top:136px;" width="24" height="22" viewBox="0 0 24 22"><path d="M5 2v13l3.200-3 2.300 5 2.200-1-2.300-4.800h4.300z" fill="#000"/><path d="M20 21h-5l5-5z" fill="#f0e000"/><path d="M20.5 15.5v6h-6" fill="none" stroke="#000" stroke-width="1"/></svg>
<svg style="left:4px;top:158px;" width="24" height="22" viewBox="0 0 24 22"><path d="M11 2l3 3.500h-6zM11 19l3-3.500h-6zM2.500 10.500l3.500-3v6zM19.500 10.500l-3.500-3v6z" fill="#000"/><path d="M11 5v11M5.500 10.500h11" stroke="#000" stroke-width="2.400"/><circle cx="11" cy="10.500" r="1.300" fill="#fff"/><path d="M20 21h-5l5-5z" fill="#f0e000"/><path d="M20.5 15.5v6h-6" fill="none" stroke="#000" stroke-width="1"/></svg>
<svg style="left:4px;top:179px;" width="24" height="22" viewBox="0 0 24 22"><path d="M3 13l4-4.500 4 4.500 4.500-5 3 0" fill="none" stroke="#1a1a90" stroke-width="1.200"/><g fill="#b00000"><rect x="2" y="12" width="2" height="2"/><rect x="6" y="7.500" width="2" height="2"/><rect x="10" y="12" width="2" height="2"/><rect x="14.500" y="7" width="2" height="2"/></g><path d="M20 21h-5l5-5z" fill="#f0e000"/><path d="M20.5 15.5v6h-6" fill="none" stroke="#000" stroke-width="1"/></svg>
<svg style="left:4px;top:200px;" width="24" height="22" viewBox="0 0 24 22"><path d="M2.500 6.500h10.500v10.500h-10.500z" fill="#fff" stroke="#000" stroke-width="1.500"/><path d="M2.500 6.500l4-4h10.500l-4 4z" fill="#999" stroke="#000" stroke-width="1.200"/><path d="M13 6.500l4-4v10.500l-4 4z" fill="#555" stroke="#000" stroke-width="1.200"/><path d="M20 21h-5l5-5z" fill="#f0e000"/><path d="M20.5 15.5v6h-6" fill="none" stroke="#000" stroke-width="1"/></svg>
<svg style="left:4px;top:221px;" width="24" height="22" viewBox="0 0 24 22"><path d="M3 11c0-5 3.500-8 7.500-8s7 3 7 7.500" fill="none" stroke="#1a1a90" stroke-width="1.300"/><path d="M17.500 12l-1.500-3.500 3 .5z" fill="#b00000"/><path d="M8 10.500h4M10 8.500v4" stroke="#b00000" stroke-width="1.200"/><text x="2" y="17" font-size="8" font-weight="bold" font-family="DejaVu Sans,sans-serif" fill="#1a1a90">?</text><path d="M20 21h-5l5-5z" fill="#f0e000"/><path d="M20.5 15.5v6h-6" fill="none" stroke="#000" stroke-width="1"/></svg>
<svg style="left:4px;top:242px;" width="24" height="22" viewBox="0 0 24 22"><circle cx="10" cy="10.500" r="7.300" fill="none" stroke="#1a1a90" stroke-width="1.300"/><path d="M10 10.500l5-5" stroke="#555" stroke-width="1"/><rect x="8.800" y="9.300" width="2.400" height="2.400" fill="#b00000"/><path d="M20 21h-5l5-5z" fill="#f0e000"/><path d="M20.5 15.5v6h-6" fill="none" stroke="#000" stroke-width="1"/></svg>
<svg style="left:4px;top:263px;" width="24" height="22" viewBox="0 0 24 22"><path d="M3.500 8.500l8-5 6.500 3-4.500 10.500z" fill="none" stroke="#1a1a90" stroke-width="1.300"/><path d="M20 21h-5l5-5z" fill="#f0e000"/><path d="M20.5 15.5v6h-6" fill="none" stroke="#000" stroke-width="1"/></svg>
<svg style="left:4px;top:284px;" width="24" height="22" viewBox="0 0 24 22"><g fill="#e4ecfa" stroke="#7f8fc0" stroke-width="1.200"><rect x="3" y="3.500" width="4.500" height="3.500"/><rect x="11" y="3.500" width="4.500" height="3.500"/><rect x="3" y="11" width="4.500" height="3.500"/><rect x="11" y="11" width="4.500" height="3.500"/></g><path d="M20 21h-5l5-5z" fill="#000"/><path d="M20.5 15.5v6h-6" fill="none" stroke="#000" stroke-width="1"/></svg>
<svg style="left:4px;top:305px;" width="24" height="22" viewBox="0 0 24 22"><path d="M2.500 4v12M17.500 4v12" stroke="#1a1a90" stroke-width="1.600"/><path d="M3 10h14" stroke="#1a1a90" stroke-width="1.200"/><path d="M3 10l3-2v4zM17 10l-3-2v4z" fill="#1a1a90"/><path d="M8.500 2l3 3M11.500 2l-3 3" stroke="#1a1a90" stroke-width=".9"/><path d="M20 21h-5l5-5z" fill="#f0e000"/><path d="M20.5 15.5v6h-6" fill="none" stroke="#000" stroke-width="1"/></svg>
<svg style="left:4px;top:326px;" width="24" height="22" viewBox="0 0 24 22"><text x="10" y="17.500" font-size="20" font-weight="bold" font-family="Liberation Serif,serif" text-anchor="middle" fill="#1010e0">T</text></svg>
<svg style="left:4px;top:347px;" width="24" height="22" viewBox="0 0 24 22"><path d="M3 11.500h14M10 8v10" stroke="#1a1a90" stroke-width="1.300"/><path d="M10 3v5" stroke="#e000c0" stroke-width="1.300"/><path d="M20 21h-5l5-5z" fill="#f0e000"/><path d="M20.5 15.5v6h-6" fill="none" stroke="#000" stroke-width="1"/></svg>
<svg style="left:4px;top:368px;" width="24" height="22" viewBox="0 0 24 22"><g fill="#e4ecfa" stroke="#7f8fc0" stroke-width="1.200"><rect x="3.500" y="2.500" width="4" height="4"/><rect x="12.500" y="7" width="4" height="4"/><rect x="5" y="13" width="4.500" height="3.500"/></g><path d="M5.500 6.500v6.500M7.500 5l5 3M12.500 10.500l-3 3" stroke="#7f8fc0" fill="none"/><path d="M20 21h-5l5-5z" fill="#000"/><path d="M20.5 15.5v6h-6" fill="none" stroke="#000" stroke-width="1"/></svg>
<svg style="left:4px;top:389px;" width="24" height="22" viewBox="0 0 24 22"><rect x="3" y="3" width="13.500" height="12.500" fill="#e8f000" stroke="#109010" stroke-width="1.400"/><path d="M3 9l6-6M3 14l11-11M6.500 15.500l10-10M11.500 15.500l5-5" stroke="#000" stroke-width="1.300"/><g fill="#b00000"><rect x="2" y="2" width="2.200" height="2.200"/><rect x="15.500" y="2" width="2.200" height="2.200"/><rect x="2" y="14.500" width="2.200" height="2.200"/><rect x="12" y="9" width="2.200" height="2.200"/><rect x="15.500" y="10" width="2.200" height="2.200"/><rect x="12" y="14.500" width="2.200" height="2.200"/></g><path d="M20 21h-5l5-5z" fill="#f0e000"/><path d="M20.5 15.5v6h-6" fill="none" stroke="#000" stroke-width="1"/></svg>
<svg style="left:4px;top:410px;" width="24" height="22" viewBox="0 0 24 22"><path d="M2.500 3.500l15 14" stroke="#000" stroke-width="1.400" stroke-dasharray="6 2 2 2"/></svg>
<svg style="left:4px;top:431px;" width="24" height="22" viewBox="0 0 24 22"><rect x="3" y="4" width="14" height="13" fill="#e87000"/></svg>
<div class="tbv" style="left:28px;top:130px;width:25px;height:29px;"></div>
<svg style="left:33px;top:132px;" width="16" height="3" viewBox="0 0 16 3"><rect x="1" y="1" width="2" height="2" fill="#fff"/><rect x="0" y="0" width="2" height="2" fill="#0a1e6e"/><rect x="5" y="1" width="2" height="2" fill="#fff"/><rect x="4" y="0" width="2" height="2" fill="#0a1e6e"/><rect x="9" y="1" width="2" height="2" fill="#fff"/><rect x="8" y="0" width="2" height="2" fill="#0a1e6e"/><rect x="13" y="1" width="2" height="2" fill="#fff"/><rect x="12" y="0" width="2" height="2" fill="#0a1e6e"/></svg>
<span class="t" style="left:31px;top:141.0px;height:13px;line-height:13px;font-size:9px;color:#3c3c44;font-weight:bold;transform:scaleX(0.9731);">DCT</span>
<div class="tbv" style="left:1px;top:458px;width:26px;height:324px;"></div>
<svg style="left:6px;top:460px;" width="16" height="3" viewBox="0 0 16 3"><rect x="1" y="1" width="2" height="2" fill="#fff"/><rect x="0" y="0" width="2" height="2" fill="#0a1e6e"/><rect x="5" y="1" width="2" height="2" fill="#fff"/><rect x="4" y="0" width="2" height="2" fill="#0a1e6e"/><rect x="9" y="1" width="2" height="2" fill="#fff"/><rect x="8" y="0" width="2" height="2" fill="#0a1e6e"/><rect x="13" y="1" width="2" height="2" fill="#fff"/><rect x="12" y="0" width="2" height="2" fill="#0a1e6e"/></svg>
<svg style="left:2px;top:464px;" width="24" height="22" viewBox="0 0 24 22"><rect x=".5" y=".5" width="23" height="20" fill="#ffd9a8" stroke="#00008b"/><text x="12" y="15" font-size="10.500" font-weight="bold" font-family="DejaVu Sans,sans-serif" text-anchor="middle" fill="#00006a" textLength="16" lengthAdjust="spacingAndGlyphs">OFF</text></svg>
<svg style="left:2px;top:486px;" width="24" height="22" viewBox="0 0 24 22"><path d="M11 2l0 10 2-1.500 0 4 3 0 0-4 2 1.500z" fill="#1a1ae0"/><path d="M12 2l7 8h-3v5h-3" fill="#1a1ae0"/><path d="M5 2v13l3-3 2 4.500 2-1-2-4.300h4z" fill="#20e0f0" stroke="#1a1ae0" stroke-width="1"/></svg>
<svg style="left:2px;top:507px;" width="24" height="22" viewBox="0 0 24 22"><path d="M9 8.500l9.500 9" stroke="#e00000" stroke-width="1.800"/><path d="M8.500 7.500l9.500 9" stroke="#000" stroke-width="1"/><path d="M7.500 1.500l1.500 3.300 3.600.3-2.700 2.400.9 3.500-3.300-1.900-3.100 2 .8-3.600-2.800-2.300 3.600-.4z" fill="#ffe000" stroke="#000" stroke-width=".9"/></svg>
<svg style="left:2px;top:528px;" width="24" height="22" viewBox="0 0 24 22"><path d="M10.500 4l7 11h-14z" fill="none" stroke="#00008b" stroke-width="4.500" stroke-linejoin="round"/><path d="M10.500 4l-7 11" stroke="#ffe000" stroke-width="2"/><path d="M10.500 4l7 11" stroke="#e00000" stroke-width="2"/><path d="M4.500 15h12" stroke="#20e0f0" stroke-width="2"/></svg>
<svg style="left:2px;top:549px;" width="24" height="22" viewBox="0 0 24 22"><text x="3.5" y="18" font-size="9" font-weight="bold" font-family="DejaVu Sans,sans-serif" fill="#00007a">G</text><path d="M9.3 7.5h10.4M14.5 2.3v10.4" stroke="#e00000" stroke-width="1.2"/><rect x="13.0" y="6.0" width="3" height="3" fill="#ffe000"/></svg>
<svg style="left:2px;top:570px;" width="24" height="22" viewBox="0 0 24 22"><text x="3.5" y="18" font-size="9" font-weight="bold" font-family="DejaVu Sans,sans-serif" fill="#00007a">L</text><path d="M7 2l11 11" stroke="#20a070"/><path d="M8.3 8h10.4M13.5 2.8v10.4" stroke="#e00000" stroke-width="1.2"/><rect x="12.0" y="6.5" width="3" height="3" fill="#ffe000"/></svg>
<svg style="left:2px;top:591px;" width="24" height="22" viewBox="0 0 24 22"><text x="4" y="18" font-size="9" font-weight="bold" font-family="DejaVu Sans,sans-serif" fill="#00007a">I</text><path d="M8.5 3l10 10M18.5 3l-10 10" stroke="#20a070" stroke-width="1"/><path d="M8.3 8h10.4M13.5 2.8v10.4" stroke="#e00000" stroke-width="1.2"/><rect x="12.0" y="6.5" width="3" height="3" fill="#ffe000"/></svg>
<svg style="left:2px;top:612px;" width="24" height="22" viewBox="0 0 24 22"><text x="3.5" y="18" font-size="8" font-weight="bold" font-family="DejaVu Sans,sans-serif" fill="#00007a">I2</text><path d="M9 3l10 10M19 3l-10 10" stroke="#20a070" stroke-width="1"/><path d="M8.8 8h10.4M14 2.8v10.4" stroke="#e00000" stroke-width="1.2"/><rect x="12.5" y="6.5" width="3" height="3" fill="#ffe000"/></svg>
<svg style="left:2px;top:633px;" width="24" height="22" viewBox="0 0 24 22"><text x="2.5" y="18" font-size="9" font-weight="bold" font-family="DejaVu Sans,sans-serif" fill="#00007a">M</text><path d="M3 4l16 7" stroke="#20a070"/><path d="M6.300000000000001 7.5h10.4M11.5 2.3v10.4" stroke="#e00000" stroke-width="1.2"/><rect x="10.0" y="6.0" width="3" height="3" fill="#ffe000"/></svg>
<svg style="left:2px;top:654px;" width="24" height="22" viewBox="0 0 24 22"><text x="2.5" y="19" font-size="8.5" font-weight="bold" font-family="DejaVu Sans,sans-serif" fill="#00007a">M2</text><path d="M3 6.500h16" stroke="#a00000"/><rect x="2.500" y="5.500" width="2" height="2" fill="#a00000"/><path d="M19 6.500l-2.500-1.500v3z" fill="#a00000"/><path d="M5.8 6.5h10.4M11 1.2999999999999998v10.4" stroke="#e00000" stroke-width="1.2"/><rect x="9.5" y="5.0" width="3" height="3" fill="#ffe000"/></svg>
<svg style="left:2px;top:675px;" width="24" height="22" viewBox="0 0 24 22"><rect x="5.5" y="4.5" width="10" height="10" fill="#fff" stroke="#1010e0" stroke-width="1.3"/><path d="M10.5 4.5v10M5.5 9.5h10" stroke="#e00000" stroke-width="1.2"/><rect x="9.0" y="8.0" width="3" height="3" fill="#ffe000"/></svg>
<svg style="left:2px;top:696px;" width="24" height="22" viewBox="0 0 24 22"><path d="M3 3l15 14" stroke="#20a070"/><rect x="5.5" y="5" width="10" height="10" fill="#fff" stroke="#1010e0" stroke-width="1.3"/><path d="M10.5 5v10M5.5 10h10" stroke="#e00000" stroke-width="1.2"/><rect x="9.0" y="8.5" width="3" height="3" fill="#ffe000"/></svg>
<svg style="left:2px;top:717px;" width="24" height="22" viewBox="0 0 24 22"><rect x="8.5" y="2.5" width="10" height="10" fill="#fff" stroke="#1010e0" stroke-width="1.3"/><path d="M13.5 2.5v10M8.5 7.5h10" stroke="#e00000" stroke-width="1.2"/><rect x="12.0" y="6.0" width="3" height="3" fill="#ffe000"/><text x="3.5" y="18.5" font-size="8.5" font-weight="bold" font-family="DejaVu Sans,sans-serif" fill="#00007a">CG</text></svg>
<svg style="left:2px;top:738px;" width="24" height="22" viewBox="0 0 24 22"><path d="M4 17c1.500-5 4-7 7-7s5.500 2 7 7" fill="none" stroke="#1010e0" stroke-width="1.300"/><path d="M7 4l8 8" stroke="#000" stroke-width="1.200"/><path d="M10.0 11h9.0M14.5 6.5v9.0" stroke="#e00000" stroke-width="1.2"/><rect x="13.0" y="9.5" width="3" height="3" fill="#ffe000"/></svg>
<svg style="left:2px;top:759px;" width="24" height="22" viewBox="0 0 24 22"><circle cx="11" cy="10.500" r="7" fill="none" stroke="#a8b4d8" stroke-width="1.300" stroke-dasharray="2 1.500"/><circle cx="11" cy="10.500" r="1" fill="#a8b4d8"/></svg>
<div class="tbv" style="left:1894px;top:129px;width:25px;height:286px;"></div>
<svg style="left:1898px;top:132px;" width="16" height="3" viewBox="0 0 16 3"><rect x="1" y="1" width="2" height="2" fill="#fff"/><rect x="0" y="0" width="2" height="2" fill="#0a1e6e"/><rect x="5" y="1" width="2" height="2" fill="#fff"/><rect x="4" y="0" width="2" height="2" fill="#0a1e6e"/><rect x="9" y="1" width="2" height="2" fill="#fff"/><rect x="8" y="0" width="2" height="2" fill="#0a1e6e"/><rect x="13" y="1" width="2" height="2" fill="#fff"/><rect x="12" y="0" width="2" height="2" fill="#0a1e6e"/></svg>
<div style="left:1895px;top:179px;width:23px;height:21px;background:#ffd9a8;border:1px solid #00008b"></div>
<div style="left:1899px;top:141px;width:14px;height:13px;background:#000"></div>
<div style="left:1899px;top:162px;width:14px;height:13px;background:#d80000"></div>
<div style="left:1899px;top:183px;width:14px;height:13px;background:#e87000"></div>
<div style="left:1899px;top:204px;width:14px;height:13px;background:#f4dc00"></div>
<div style="left:1899px;top:225px;width:14px;height:13px;background:#30b800"></div>
<div style="left:1899px;top:246px;width:14px;height:13px;background:#00d4d4"></div>
<div style="left:1899px;top:267px;width:14px;height:13px;background:#0000d0"></div>
<div style="left:1899px;top:288px;width:14px;height:13px;background:#d000d0"></div>
<div style="left:1899px;top:308px;width:16px;height:1px;background:#6a8ccb"></div>
<div style="left:1900px;top:309px;width:16px;height:1px;background:#f0f6ff"></div>
<div style="left:1899px;top:335px;width:16px;height:1px;background:#6a8ccb"></div>
<div style="left:1900px;top:336px;width:16px;height:1px;background:#f0f6ff"></div>
<div style="left:1899px;top:362px;width:16px;height:1px;background:#6a8ccb"></div>
<div style="left:1900px;top:363px;width:16px;height:1px;background:#f0f6ff"></div>
<div style="left:1899px;top:389px;width:16px;height:1px;background:#6a8ccb"></div>
<div style="left:1900px;top:390px;width:16px;height:1px;background:#f0f6ff"></div>
<div style="left:1898px;top:314px;width:16px;height:15px;background:#c0c0c0"></div>
<svg style="left:1898px;top:314px;" width="16" height="16" viewBox="0 0 16 16"><text x="8" y="13.500" font-size="16" font-family="Liberation Sans,sans-serif" text-anchor="middle" textLength="13" lengthAdjust="spacingAndGlyphs">A</text></svg>
<div style="left:1898px;top:341px;width:16px;height:15px;background:#c0c0c0"></div>
<svg style="left:1898px;top:341px;" width="16" height="16" viewBox="0 0 16 16"><path d="M.6 6.800c0-.9.500-1.300 1.400-1.300h7.200l1.600-1.300h4.700v3.300l-4.300 5.200h-4.200l-1-2h-1.700l-.6-1.500h-1.900v-1.200h-.7c-.4 0-.5-.4-.5-1.200z" fill="#fff" stroke="#000" stroke-width="1.100"/><path d="M5.500 8.700h3.800l-1.300 2.500M9.200 5.600l1.800 1.500" fill="none" stroke="#000" stroke-width="1"/></svg>
<div style="left:1898px;top:368px;width:16px;height:15px;background:#c0c0c0"></div>
<svg style="left:1898px;top:368px;" width="16" height="16" viewBox="0 0 16 16"><path d="M8 1.500c-4 0-7 2.500-7 6s3 6.500 6 6.500c1.500 0 1.500-1.500 3-1.500 3 0 4.500-2 4.500-5S12 1.500 8 1.500z" fill="#f0e020" stroke="#000"/><circle cx="5" cy="6" r="1.300" fill="#e00000"/><circle cx="8" cy="4.500" r="1.300" fill="#10a010"/><circle cx="11" cy="6.500" r="1.300" fill="#1010e0"/><circle cx="6" cy="10" r="1.300" fill="#00c0d0"/><path d="M4 15L14 3" stroke="#900000" stroke-width="1.500"/><path d="M13 4l2.500-3v4z" fill="#ddd" stroke="#000" stroke-width=".6"/></svg>
<div style="left:1898px;top:395px;width:16px;height:15px;background:#c0c0c0"></div>
<svg style="left:1898px;top:395px;" width="16" height="16" viewBox="0 0 16 16"><rect x="1" y="6" width="5" height="6" fill="#7a9a9a" stroke="#000"/><rect x="3.500" y="8.500" width="5" height="6" fill="#ccc" stroke="#000"/><rect x="9.500" y=".5" width="3" height="3" fill="#e00000"/><rect x="13" y=".5" width="3" height="3" fill="#10c010"/><rect x="9.500" y="4" width="3" height="3" fill="#00d0e0"/><rect x="13" y="4" width="3" height="3" fill="#f0e000"/><path d="M13 15v-4M13 9l-2 2.500h4z" stroke="#00008b" fill="#00008b"/></svg>
<!-- sec_mdi -->
<div style="left:54px;top:126px;width:1839px;height:914px;border-top:1px solid #8c8c8c;border-left:1px solid #8c8c8c;border-right:1px solid #fff;border-bottom:1px solid #fff"></div>
<div style="left:55px;top:127px;width:1837px;height:912px;background:#a0a0a0;border-top:1px solid #6c6c6c;border-left:1px solid #6c6c6c;border-right:1px solid #eef0f4;border-bottom:1px solid #eef0f4"></div>
<div style="left:56px;top:128px;width:1835px;height:910px;overflow:hidden"><div style="left:0px;top:0px;width:612px;height:304px;border:1px solid #454545;border-radius:6px 6px 0 0;background:linear-gradient(180deg,#bccbdc 0,#c9d6e5 14px,#dbe5f1 32px,#d7e3f0 33px,#d7e3f0 100%);box-shadow:inset 1px 1px 0 #f4f8fc,inset -1px -1px 0 #eef3fa"></div>
<svg style="left:10px;top:11px;" width="16" height="16" viewBox="0 0 16 16"><path d="M.8 .8h11l3.400 3.400v11h-14.400z" fill="#fff" stroke="#000" stroke-width="1.600"/><path d="M11.500 .8v3.700h3.700" fill="#fff" stroke="#000" stroke-width="1"/><path d="M3.500 3.500h5.500c3 0 4 2 4 4.500s-1 4.500-4 4.500h-5.500z" fill="#30e8f8" stroke="#1818e0" stroke-width="1.200"/><rect x="6" y="5.500" width="3.600" height="5" fill="#fff" stroke="#1818e0" stroke-width="1.400"/><path d="M4.500 3.300h4M9.800 5.500v5" stroke="#e00000" stroke-width="1.200"/></svg>
<span class="t" style="left:30px;top:11.5px;height:16px;line-height:16px;font-size:12px;color:#9a9a9a;transform:scaleX(0.9800);">Servohalterung-V2.dcd : Vorderansicht</span>
<div style="left:502px;top:10px;width:32px;height:18px;border:1px solid #8e9cb8;border-radius:3px;background:linear-gradient(180deg,#d3deeb,#c3d1e2 50%,#cdd9e8)"></div><svg style="left:502px;top:10px;" width="31" height="18" viewBox="0 0 31 18"><rect x="10.500" y="9.500" width="10" height="3" rx="1" fill="#fff" stroke="#6b7488"/></svg>
<div style="left:536px;top:10px;width:32px;height:18px;border:1px solid #8e9cb8;border-radius:3px;background:linear-gradient(180deg,#d3deeb,#c3d1e2 50%,#cdd9e8)"></div><svg style="left:536px;top:10px;" width="31" height="18" viewBox="0 0 31 18"><rect x="10.500" y="4.500" width="10" height="8" rx="1" fill="#fff" stroke="#6b7488"/><rect x="13.500" y="7.500" width="4" height="2" fill="#c8d4e4" stroke="#6b7488"/></svg>
<div style="left:570px;top:10px;width:32px;height:18px;border:1px solid #8e9cb8;border-radius:3px;background:linear-gradient(180deg,#d3deeb,#c3d1e2 50%,#cdd9e8)"></div><svg style="left:570px;top:10px;" width="31" height="18" viewBox="0 0 31 18"><path d="M10.500 4.500h3.200l1.800 2 1.800-2h3.200l-3.300 4 3.300 4h-3.200l-1.800-2-1.800 2h-3.200l3.300-4z" fill="#fff" stroke="#5b6478" stroke-width="1.100"/></svg>
<div style="left:8px;top:31px;width:595px;height:264px;background:#fff;border:2px solid #6a6a6a;border-right:1px solid #fff;border-bottom:1px solid #fff"></div>
<div style="left:0px;top:304px;width:612px;height:304px;border:1px solid #454545;border-radius:6px 6px 0 0;background:linear-gradient(180deg,#bccbdc 0,#c9d6e5 14px,#dbe5f1 32px,#d7e3f0 33px,#d7e3f0 100%);box-shadow:inset 1px 1px 0 #f4f8fc,inset -1px -1px 0 #eef3fa"></div>
<svg style="left:10px;top:315px;" width="16" height="16" viewBox="0 0 16 16"><path d="M.8 .8h11l3.400 3.400v11h-14.400z" fill="#fff" stroke="#000" stroke-width="1.600"/><path d="M11.500 .8v3.700h3.700" fill="#fff" stroke="#000" stroke-width="1"/><path d="M3.500 3.500h5.500c3 0 4 2 4 4.500s-1 4.500-4 4.500h-5.500z" fill="#30e8f8" stroke="#1818e0" stroke-width="1.200"/><rect x="6" y="5.500" width="3.600" height="5" fill="#fff" stroke="#1818e0" stroke-width="1.400"/><path d="M4.500 3.300h4M9.800 5.500v5" stroke="#e00000" stroke-width="1.200"/></svg>
<span class="t" style="left:30px;top:315.5px;height:16px;line-height:16px;font-size:12px;color:#9a9a9a;transform:scaleX(0.9852);">Servohalterung-V2.dcd : Draufsicht</span>
<div style="left:502px;top:314px;width:32px;height:18px;border:1px solid #8e9cb8;border-radius:3px;background:linear-gradient(180deg,#d3deeb,#c3d1e2 50%,#cdd9e8)"></div><svg style="left:502px;top:314px;" width="31" height="18" viewBox="0 0 31 18"><rect x="10.500" y="9.500" width="10" height="3" rx="1" fill="#fff" stroke="#6b7488"/></svg>
<div style="left:536px;top:314px;width:32px;height:18px;border:1px solid #8e9cb8;border-radius:3px;background:linear-gradient(180deg,#d3deeb,#c3d1e2 50%,#cdd9e8)"></div><svg style="left:536px;top:314px;" width="31" height="18" viewBox="0 0 31 18"><rect x="10.500" y="4.500" width="10" height="8" rx="1" fill="#fff" stroke="#6b7488"/><rect x="13.500" y="7.500" width="4" height="2" fill="#c8d4e4" stroke="#6b7488"/></svg>
<div style="left:570px;top:314px;width:32px;height:18px;border:1px solid #8e9cb8;border-radius:3px;background:linear-gradient(180deg,#d3deeb,#c3d1e2 50%,#cdd9e8)"></div><svg style="left:570px;top:314px;" width="31" height="18" viewBox="0 0 31 18"><path d="M10.500 4.500h3.200l1.800 2 1.800-2h3.200l-3.300 4 3.300 4h-3.200l-1.800-2-1.800 2h-3.200l3.300-4z" fill="#fff" stroke="#5b6478" stroke-width="1.100"/></svg>
<div style="left:8px;top:335px;width:595px;height:264px;background:#fff;border:2px solid #6a6a6a;border-right:1px solid #fff;border-bottom:1px solid #fff"></div>
<div style="left:0px;top:608px;width:612px;height:304px;border:1px solid #454545;border-radius:6px 6px 0 0;background:linear-gradient(180deg,#bccbdc 0,#c9d6e5 14px,#dbe5f1 32px,#d7e3f0 33px,#d7e3f0 100%);box-shadow:inset 1px 1px 0 #f4f8fc,inset -1px -1px 0 #eef3fa"></div>
<svg style="left:10px;top:619px;" width="16" height="16" viewBox="0 0 16 16"><path d="M.8 .8h11l3.400 3.400v11h-14.400z" fill="#fff" stroke="#000" stroke-width="1.600"/><path d="M11.500 .8v3.700h3.700" fill="#fff" stroke="#000" stroke-width="1"/><path d="M3.500 3.500h5.500c3 0 4 2 4 4.500s-1 4.500-4 4.500h-5.500z" fill="#30e8f8" stroke="#1818e0" stroke-width="1.200"/><rect x="6" y="5.500" width="3.600" height="5" fill="#fff" stroke="#1818e0" stroke-width="1.400"/><path d="M4.500 3.300h4M9.800 5.500v5" stroke="#e00000" stroke-width="1.200"/></svg>
<span class="t" style="left:30px;top:619.5px;height:16px;line-height:16px;font-size:12px;color:#9a9a9a;transform:scaleX(0.9766);">Servohalterung-V2.dcd : Seitenansicht</span>
<div style="left:502px;top:618px;width:32px;height:18px;border:1px solid #8e9cb8;border-radius:3px;background:linear-gradient(180deg,#d3deeb,#c3d1e2 50%,#cdd9e8)"></div><svg style="left:502px;top:618px;" width="31" height="18" viewBox="0 0 31 18"><rect x="10.500" y="9.500" width="10" height="3" rx="1" fill="#fff" stroke="#6b7488"/></svg>
<div style="left:536px;top:618px;width:32px;height:18px;border:1px solid #8e9cb8;border-radius:3px;background:linear-gradient(180deg,#d3deeb,#c3d1e2 50%,#cdd9e8)"></div><svg style="left:536px;top:618px;" width="31" height="18" viewBox="0 0 31 18"><rect x="10.500" y="4.500" width="10" height="8" rx="1" fill="#fff" stroke="#6b7488"/><rect x="13.500" y="7.500" width="4" height="2" fill="#c8d4e4" stroke="#6b7488"/></svg>
<div style="left:570px;top:618px;width:32px;height:18px;border:1px solid #8e9cb8;border-radius:3px;background:linear-gradient(180deg,#d3deeb,#c3d1e2 50%,#cdd9e8)"></div><svg style="left:570px;top:618px;" width="31" height="18" viewBox="0 0 31 18"><path d="M10.500 4.500h3.200l1.800 2 1.800-2h3.200l-3.300 4 3.300 4h-3.200l-1.800-2-1.800 2h-3.200l3.300-4z" fill="#fff" stroke="#5b6478" stroke-width="1.100"/></svg>
<div style="left:8px;top:639px;width:595px;height:264px;background:#fff;border:2px solid #6a6a6a;border-right:1px solid #fff;border-bottom:1px solid #fff"></div>
<div style="left:612px;top:0px;width:1224px;height:910px;border:1px solid #454545;border-radius:6px 6px 0 0;background:linear-gradient(180deg,#bccbdc 0,#c9d6e5 14px,#dbe5f1 32px,#d7e3f0 33px,#d7e3f0 100%);box-shadow:inset 1px 1px 0 #f4f8fc,inset -1px -1px 0 #eef3fa"></div>
<svg style="left:622px;top:11px;" width="16" height="16" viewBox="0 0 16 16"><path d="M.8 .8h11l3.400 3.400v11h-14.400z" fill="#fff" stroke="#000" stroke-width="1.600"/><path d="M11.500 .8v3.700h3.700" fill="#fff" stroke="#000" stroke-width="1"/><path d="M3.500 3.500h5.500c3 0 4 2 4 4.500s-1 4.500-4 4.500h-5.500z" fill="#30e8f8" stroke="#1818e0" stroke-width="1.200"/><rect x="6" y="5.500" width="3.600" height="5" fill="#fff" stroke="#1818e0" stroke-width="1.400"/><path d="M4.500 3.300h4M9.800 5.500v5" stroke="#e00000" stroke-width="1.200"/></svg>
<span class="t" style="left:642px;top:11.5px;height:16px;line-height:16px;font-size:12px;color:#9a9a9a;transform:scaleX(0.9912);">Servohalterung-V2.dcd : Hauptansicht</span>
<div style="left:1726px;top:10px;width:32px;height:18px;border:1px solid #8e9cb8;border-radius:3px;background:linear-gradient(180deg,#d3deeb,#c3d1e2 50%,#cdd9e8)"></div><svg style="left:1726px;top:10px;" width="31" height="18" viewBox="0 0 31 18"><rect x="10.500" y="9.500" width="10" height="3" rx="1" fill="#fff" stroke="#6b7488"/></svg>
<div style="left:1760px;top:10px;width:32px;height:18px;border:1px solid #8e9cb8;border-radius:3px;background:linear-gradient(180deg,#d3deeb,#c3d1e2 50%,#cdd9e8)"></div><svg style="left:1760px;top:10px;" width="31" height="18" viewBox="0 0 31 18"><rect x="10.500" y="4.500" width="10" height="8" rx="1" fill="#fff" stroke="#6b7488"/><rect x="13.500" y="7.500" width="4" height="2" fill="#c8d4e4" stroke="#6b7488"/></svg>
<div style="left:1794px;top:10px;width:32px;height:18px;border:1px solid #8e9cb8;border-radius:3px;background:linear-gradient(180deg,#d3deeb,#c3d1e2 50%,#cdd9e8)"></div><svg style="left:1794px;top:10px;" width="31" height="18" viewBox="0 0 31 18"><path d="M10.500 4.500h3.200l1.800 2 1.800-2h3.200l-3.300 4 3.300 4h-3.200l-1.800-2-1.800 2h-3.200l3.300-4z" fill="#fff" stroke="#5b6478" stroke-width="1.100"/></svg>
<div style="left:620px;top:31px;width:1206px;height:870px;background:#fff;border:2px solid #6a6a6a;border-right:1px solid #fff;border-bottom:1px solid #fff"></div>
<svg style="left:-56px;top:-128px" width="1920" height="1080" viewBox="0 0 1920 1080"><path d="M308.5 271.5 L215.0 271.5 L215.0 289.0 L280.5 289.0 L280.5 345.0 L444.3 345.0 L444.3 289.0 L509.7 289.0 L509.7 271.5 L416.3 271.5" fill="none" stroke="#e87400" stroke-width="1" shape-rendering="crispEdges"/>
<path d="M308.5 271.5 L308.5 404.5" fill="none" stroke="#e87400" stroke-width="1" shape-rendering="crispEdges"/>
<path d="M416.3 271.5 L416.3 404.5" fill="none" stroke="#e87400" stroke-width="1" shape-rendering="crispEdges"/>
<path d="M308.5 327.5 L416.3 327.5" fill="none" stroke="#e87400" stroke-width="1" shape-rendering="crispEdges"/>
<rect x="234" y="272" width="9.700" height="17" fill="#e87400"/><rect x="481.200" y="272" width="9.700" height="17" fill="#e87400"/>
<circle cx="296.800" cy="299" r="4.800" fill="none" stroke="#e87400" stroke-width="1.100"/><circle cx="427.900" cy="299" r="4.800" fill="none" stroke="#e87400" stroke-width="1.100"/>
<path d="M215.0 266.5 L215.0 179.0" fill="none" stroke="#e87400" stroke-width="1" shape-rendering="crispEdges"/>
<path d="M309.5 266.5 L309.5 179.0" fill="none" stroke="#e87400" stroke-width="1" shape-rendering="crispEdges"/>
<path d="M215.0 181.5 L251.0 181.5" fill="none" stroke="#e87400" stroke-width="1" shape-rendering="crispEdges"/>
<path d="M274.0 181.5 L309.5 181.5" fill="none" stroke="#e87400" stroke-width="1" shape-rendering="crispEdges"/>
<path d="M215.0 182.5 L221.0 182.5" fill="none" stroke="#e87400" stroke-width="1" shape-rendering="crispEdges"/>
<path d="M309.5 182.5 L303.5 182.5" fill="none" stroke="#e87400" stroke-width="1" shape-rendering="crispEdges"/>
<text x="262" y="184.300" font-size="7.500" font-weight="bold" font-family="Liberation Sans,sans-serif" fill="#e87400" stroke="#e87400" stroke-width=".35" text-anchor="middle" textLength="21" lengthAdjust="spacingAndGlyphs">12.966</text>
<path d="M308.5 402.5 L351.0 402.5" fill="none" stroke="#e87400" stroke-width="1" shape-rendering="crispEdges"/>
<path d="M373.0 402.5 L416.3 402.5" fill="none" stroke="#e87400" stroke-width="1" shape-rendering="crispEdges"/>
<path d="M308.5 403.5 L314.5 403.5" fill="none" stroke="#e87400" stroke-width="1" shape-rendering="crispEdges"/>
<path d="M416.3 403.5 L410.0 403.5" fill="none" stroke="#e87400" stroke-width="1" shape-rendering="crispEdges"/>
<text x="362" y="405" font-size="7.500" font-weight="bold" font-family="Liberation Sans,sans-serif" fill="#e87400" stroke="#e87400" stroke-width=".35" text-anchor="middle" textLength="20" lengthAdjust="spacingAndGlyphs">22.966</text>
<path d="M92.5 378.5V395.5H110.5" fill="none" stroke="#000" stroke-width="1" shape-rendering="crispEdges"/><rect x="91.0" y="394.0" width="3" height="3" fill="#fff" stroke="#000" stroke-width=".8"/><rect x="92.0" y="375.5" width="1" height="1" fill="#000"/>
<rect x="86.500" y="552.500" width="552" height="87" fill="none" stroke="#e87400" stroke-width="1.100"/>
<path d="M209.5 552.5 L209.5 639.5" fill="none" stroke="#e87400" stroke-width="1" shape-rendering="crispEdges"/>
<path d="M261.5 552.5 L261.5 639.5" fill="none" stroke="#e87400" stroke-width="1" shape-rendering="crispEdges"/>
<path d="M463.5 552.5 L463.5 639.5" fill="none" stroke="#e87400" stroke-width="1" shape-rendering="crispEdges"/>
<path d="M515.5 552.5 L515.5 639.5" fill="none" stroke="#e87400" stroke-width="1" shape-rendering="crispEdges"/>
<rect x="231" y="552" width="4" height="88" fill="#e87400" shape-rendering="crispEdges"/>
<rect x="236" y="552" width="2" height="88" fill="#e87400" shape-rendering="crispEdges"/>
<rect x="239" y="552" width="2" height="88" fill="#e87400" shape-rendering="crispEdges"/>
<rect x="242" y="552" width="3" height="88" fill="#e87400" shape-rendering="crispEdges"/>
<rect x="246" y="552" width="3" height="88" fill="#e87400" shape-rendering="crispEdges"/>
<rect x="476" y="552" width="3" height="88" fill="#e87400" shape-rendering="crispEdges"/>
<rect x="480" y="552" width="3" height="88" fill="#e87400" shape-rendering="crispEdges"/>
<rect x="484" y="552" width="2" height="88" fill="#e87400" shape-rendering="crispEdges"/>
<rect x="487" y="552" width="2" height="88" fill="#e87400" shape-rendering="crispEdges"/>
<rect x="490" y="552" width="4" height="88" fill="#e87400" shape-rendering="crispEdges"/>
<circle cx="130.200" cy="596" r="9" fill="none" stroke="#e87400" stroke-width="1.100"/><circle cx="594.300" cy="596" r="9" fill="none" stroke="#e87400" stroke-width="1.100"/>
<path d="M261.5 640.5 L270.5 640.5" fill="none" stroke="#e87400" stroke-width="1" shape-rendering="crispEdges"/>
<path d="M453.0 640.5 L463.0 640.5" fill="none" stroke="#e87400" stroke-width="1" shape-rendering="crispEdges"/>
<path d="M91.500 680V699.500H110" fill="none" stroke="#000" stroke-width="1" shape-rendering="crispEdges"/><path d="M89 679.500h4.500" stroke="#000" stroke-width="1"/>
<path d="M385.2 787.0 L385.2 874.0" fill="none" stroke="#e87400" stroke-width="1" shape-rendering="crispEdges"/>
<rect x="339.500" y="879.500" width="45.700" height="74" fill="none" stroke="#e87400" stroke-width="1.100"/>
<rect x="357" y="880" width="10.800" height="17.500" fill="#e87400"/>
<path d="M339.5 898.0 L385.2 898.0" fill="none" stroke="#e87400" stroke-width="1" shape-rendering="crispEdges"/>
<rect x="339.500" y="902" width="45.700" height="9.500" fill="#e87400"/>
<path d="M339.5 935.2 L385.2 935.2" fill="none" stroke="#e87400" stroke-width="1" shape-rendering="crispEdges"/>
<path d="M339.5 953.5 L339.5 1012.0" fill="none" stroke="#e87400" stroke-width="1" shape-rendering="crispEdges"/>
<path d="M338.0 1010.5 L339.5 1012.0" fill="none" stroke="#e87400" stroke-width="1" shape-rendering="crispEdges"/>
<path d="M92.500 984V1005.500M92.500 1001.500H115" fill="none" stroke="#000" stroke-width="1" shape-rendering="crispEdges"/><rect x="92" y="981" width="1" height="1" fill="#000"/>
<path d="M1415.0 496.9 L1468.4 460.1 L1770.7 486.4 L1718.7 524.2 L1415.0 496.9" fill="none" stroke="#e87400" stroke-width="1" shape-rendering="crispEdges"/>
<path d="M1770.7 486.4 L1769.8 548.5 L1717.3 587.0 L1718.7 524.2" fill="none" stroke="#e87400" stroke-width="1" shape-rendering="crispEdges"/>
<path d="M1558.5 529.7 L1769.8 548.5" fill="none" stroke="#e87400" stroke-width="1" shape-rendering="crispEdges"/>
<path d="M1503.8 567.8 L1717.3 587.0" fill="none" stroke="#e87400" stroke-width="1" shape-rendering="crispEdges"/>
<path d="M1558.5 529.7 L1503.8 567.8" fill="none" stroke="#e87400" stroke-width="1" shape-rendering="crispEdges"/>
<path d="M1468.4 460.1 L1468.4 643.9" fill="none" stroke="#e87400" stroke-width="1" shape-rendering="crispEdges"/>
<path d="M1558.5 529.7 L1557.6 714.8" fill="none" stroke="#e87400" stroke-width="1" shape-rendering="crispEdges"/>
<path d="M1503.8 567.8 L1504.4 753.3" fill="none" stroke="#e87400" stroke-width="1" shape-rendering="crispEdges"/>
<path d="M1413.5 512.5 L1413.5 939.5" fill="none" stroke="#e87400" stroke-width="1" shape-rendering="crispEdges"/>
<path d="M1414.5 497.0 L1414.5 683.0" fill="none" stroke="#e87400" stroke-width="1" shape-rendering="crispEdges"/>
<path d="M1248.8 623.8 L1468.3 644.5 L1414.0 683.2 L1070.6 649.9 L1078.0 645.0" fill="none" stroke="#e87400" stroke-width="1" shape-rendering="crispEdges"/>
<path d="M1039.5 665.4 L1557.8 714.7 L1504.4 753.3 L981.9 703.1 L1039.5 665.4" fill="none" stroke="#e87400" stroke-width="1" shape-rendering="crispEdges"/>
<path d="M981.7 640.0 L981.9 703.1" fill="none" stroke="#e87400" stroke-width="1" shape-rendering="crispEdges"/>
<path d="M1039.5 640.0 L1039.5 665.4" fill="none" stroke="#e87400" stroke-width="1" shape-rendering="crispEdges"/>
<path d="M1070.5 640.0 L1072.5 905.0" fill="none" stroke="#e87400" stroke-width="1" shape-rendering="crispEdges"/>
<path d="M832.5 161.0 L832.5 220.0" fill="none" stroke="#e87400" stroke-width="1" shape-rendering="crispEdges"/>
<path d="M1126.5 161.0 L1126.5 220.0" fill="none" stroke="#e87400" stroke-width="1" shape-rendering="crispEdges"/>
<path d="M1072.0 898.5 L1203.0 911.2" fill="none" stroke="#e87400" stroke-width="1" shape-rendering="crispEdges"/>
<path d="M1281.0 918.7 L1413.0 931.5" fill="none" stroke="#e87400" stroke-width="1" shape-rendering="crispEdges"/>
<path d="M1072 898.500l13 -1.800 -.7 6z" fill="#e87400"/><path d="M1413 931.500l-13 1.800 .7 -6z" fill="#e87400"/>
<text transform="translate(1241.500,922.500) rotate(5.500)" font-size="20" font-family="Liberation Sans,sans-serif" fill="#e87400" stroke="#e87400" stroke-width=".9" text-anchor="middle" textLength="63" lengthAdjust="spacingAndGlyphs">22.966</text>
<path d="M1439.5 583.5L1499.5 540.8M1437.0 588.0L1504.5 540.0M1436.2 591.3L1507.9 540.3M1436.1 594.2L1510.6 541.2M1436.4 596.7L1512.9 542.3M1437.1 599.0L1514.9 543.7M1438.0 601.1L1516.5 545.3M1439.2 603.0L1517.9 547.0M1440.7 604.7L1519.1 549.0M1442.4 606.2L1520.0 551.1M1444.5 607.6L1520.6 553.4M1446.8 608.6L1520.8 556.0M1449.7 609.4L1520.6 559.0M1453.3 609.6L1519.6 562.4M1459.5 607.9L1515.9 567.8" stroke="#e87400" stroke-width="1" fill="none" shape-rendering="crispEdges"/><path d="M1461.7 606.6L1514.0 569.4M1462.2 605.5L1514.5 568.3M1462.1 603.7L1514.4 566.5M1461.3 601.1L1513.6 563.9M1459.9 598.0L1512.2 560.8M1457.9 594.5L1510.2 557.3M1455.6 591.1L1507.9 553.9M1453.1 587.7L1505.4 550.5M1450.5 584.8L1502.8 547.6M1448.0 582.4L1500.3 545.2M1445.8 580.8L1498.1 543.6M1444.1 580.0L1496.4 542.8M1442.9 580.2L1495.2 543.0M1442.4 581.3L1494.7 544.1M1442.5 583.1L1494.8 545.9M1443.3 585.7L1495.6 548.5M1444.7 588.8L1497.0 551.6M1446.7 592.3L1499.0 555.1M1449.0 595.7L1501.3 558.5M1451.5 599.1L1503.8 561.9M1454.1 602.0L1506.4 564.8M1456.6 604.4L1508.9 567.2M1458.8 606.0L1511.1 568.8M1460.5 606.8L1512.8 569.6" stroke="#e87400" stroke-width="1" fill="none" shape-rendering="crispEdges"/><path d="M1461.7 606.6L1514.0 569.4A16.2 16.2 0 0 0 1495.2 543.0L1442.9 580.2A16.2 16.2 0 0 0 1461.7 606.6z" fill="none" stroke="#e87400" stroke-width="1.2"/>
<rect x="1651" y="497" width="5" height="66" fill="#e87400"/><rect x="1680" y="497" width="4.700" height="66" fill="#e87400"/><path d="M1658 494.500V565.500M1660.8 494.500V565.500M1663.7 494.500V565.500M1666.6 494.500V565.500M1669.5 494.500V565.500M1672.4 494.500V565.500M1675.3 494.500V565.500M1678 494.500V565.500" stroke="#e87400" stroke-width="1.500" fill="none"/><ellipse cx="1667.900" cy="498.5" rx="16.500" ry="4.2" fill="none" stroke="#e87400" stroke-width="1.100"/><ellipse cx="1667.900" cy="561.3" rx="16.500" ry="4.2" fill="none" stroke="#e87400" stroke-width="1.100"/><path d="M1656 520h24M1656 538.500h24" stroke="#e87400" stroke-width="1" fill="none"/>
<g stroke="#000" stroke-width="1" fill="none"><path d="M763.500 925V871"/><path d="M766 926l54 4.800"/><path d="M765 924l17-11.500"/><rect x="757.500" y="920.500" width="12" height="11" fill="#fff"/><rect x="763.500" y="922.500" width="5" height="4"/></g>
<text x="762" y="863.5" font-size="14" font-family="Liberation Sans,sans-serif" fill="#000" text-anchor="middle">Y</text>
<text x="789" y="910.5" font-size="14" font-family="Liberation Sans,sans-serif" fill="#000" text-anchor="middle">Z</text>
<text x="827" y="935" font-size="14" font-family="Liberation Sans,sans-serif" fill="#000" text-anchor="middle">X</text></svg>
<div style="left:1809px;top:33px;width:18px;height:679px;background-color:#fff;background-image:linear-gradient(45deg,#efefef 25%,transparent 25%,transparent 75%,#efefef 75%),linear-gradient(45deg,#efefef 25%,transparent 25%,transparent 75%,#efefef 75%);background-size:2px 2px;background-position:0 0,1px 1px"></div>
<div style="left:1809px;top:33px;width:18px;height:17px;background:#f0f0f0;border-top:1px solid #e3e3e3;border-left:1px solid #e3e3e3;border-right:1px solid #696969;border-bottom:1px solid #696969;box-shadow:inset -1px -1px 0 #a0a0a0,inset 1px 1px 0 #fff"></div>
<svg style="left:1814px;top:39px;" width="7" height="4" viewBox="0 0 7 4"><path d="M0 4h7l-3.500-4z" fill="#000"/></svg>
<div style="left:1809px;top:277px;width:18px;height:220px;background:#f0f0f0;border-top:1px solid #e3e3e3;border-left:1px solid #e3e3e3;border-right:1px solid #696969;border-bottom:1px solid #696969;box-shadow:inset -1px -1px 0 #a0a0a0,inset 1px 1px 0 #fff"></div>
<div style="left:1809px;top:695px;width:18px;height:17px;background:#f0f0f0;border-top:1px solid #e3e3e3;border-left:1px solid #e3e3e3;border-right:1px solid #696969;border-bottom:1px solid #696969;box-shadow:inset -1px -1px 0 #a0a0a0,inset 1px 1px 0 #fff"></div>
<svg style="left:1814px;top:701px;" width="7" height="4" viewBox="0 0 7 4"><path d="M0 0h7l-3.500 4z" fill="#000"/></svg>
<div style="left:1809px;top:712px;width:18px;height:17px;background:#f0f0f0;border-bottom:1px solid #696969;box-shadow:inset 0 -1px 0 #a0a0a0"></div>
<svg style="left:1810px;top:712px;" width="16" height="16" viewBox="0 0 16 16"><rect x="2.500" y="1.500" width="12" height="12" fill="#fff" stroke="#000"/><path d="M3 2l11 11M14 2l-11 11" stroke="#e00000" stroke-width="1"/></svg>
<div style="left:1809px;top:729px;width:18px;height:19px;background:#f0f0f0;border-bottom:1px solid #696969;box-shadow:inset 0 -1px 0 #a0a0a0"></div>
<svg style="left:1810px;top:730px;" width="16" height="16" viewBox="0 0 16 16"><path d="M5.500 1v14M10.500 1v14M1 5.500h14M1 10.500h14" stroke="#000" stroke-width="1.300"/></svg>
<div style="left:1809px;top:748px;width:18px;height:19px;background:#f0f0f0;border-bottom:1px solid #696969;box-shadow:inset 0 -1px 0 #a0a0a0"></div>
<svg style="left:1810px;top:749px;" width="16" height="16" viewBox="0 0 16 16"><path d="M6 2h4v4h4v4h-4v4h-4v-4h-4v-4h4z" fill="#9a9a9a"/></svg>
<div style="left:1809px;top:767px;width:18px;height:19px;background:#f0f0f0;border-bottom:1px solid #696969;box-shadow:inset 0 -1px 0 #a0a0a0"></div>
<svg style="left:1810px;top:768px;" width="16" height="16" viewBox="0 0 16 16"><circle cx="7.500" cy="7" r="5" fill="none" stroke="#000" stroke-width="1.400"/><path d="M11 11l3.500 3.500" stroke="#000" stroke-width="2"/><rect x="4.500" y="3.500" width="4" height="5" fill="#fff" stroke="#000" stroke-width=".9"/><rect x="6.500" y="5.500" width="4" height="5" fill="#fff" stroke="#000" stroke-width=".9"/></svg>
<div style="left:1809px;top:786px;width:18px;height:19px;background:#f0f0f0;border-bottom:1px solid #696969;box-shadow:inset 0 -1px 0 #a0a0a0"></div>
<svg style="left:1810px;top:787px;" width="16" height="16" viewBox="0 0 16 16"><circle cx="7.500" cy="7" r="5" fill="none" stroke="#000" stroke-width="1.400"/><path d="M11 11l3.500 3.500" stroke="#000" stroke-width="2"/><rect x="5.500" y="5" width="4" height="4" fill="none" stroke="#000" stroke-width="1.100"/></svg>
<div style="left:1809px;top:805px;width:18px;height:19px;background:#f0f0f0;border-bottom:1px solid #696969;box-shadow:inset 0 -1px 0 #a0a0a0"></div>
<svg style="left:1810px;top:806px;" width="16" height="16" viewBox="0 0 16 16"><circle cx="7.500" cy="7" r="5" fill="none" stroke="#000" stroke-width="1.400"/><path d="M11 11l3.500 3.500" stroke="#000" stroke-width="2"/><path d="M5 7h5M7.500 4.500v5" stroke="#000" stroke-width="1.100"/></svg>
<div style="left:1809px;top:824px;width:18px;height:19px;background:#f0f0f0;border-bottom:1px solid #696969;box-shadow:inset 0 -1px 0 #a0a0a0"></div>
<svg style="left:1810px;top:825px;" width="16" height="16" viewBox="0 0 16 16"><circle cx="7.500" cy="7" r="5" fill="none" stroke="#000" stroke-width="1.400"/><path d="M11 11l3.500 3.500" stroke="#000" stroke-width="2"/><path d="M5 7h5" stroke="#000" stroke-width="1.100"/></svg>
<div style="left:1809px;top:843px;width:18px;height:19px;background:#f0f0f0;border-bottom:1px solid #696969;box-shadow:inset 0 -1px 0 #a0a0a0"></div>
<svg style="left:1810px;top:844px;" width="16" height="16" viewBox="0 0 16 16"><circle cx="7.500" cy="7" r="5" fill="none" stroke="#a0a0a0" stroke-width="1.400"/><path d="M11 11l3.500 3.500" stroke="#a0a0a0" stroke-width="2"/><path d="M6 5l-1.500 2 2.500 .5M5 7c1-2 4-2 4.500 0s-1 3-2.500 2.500" stroke="#a0a0a0" fill="none" stroke-width=".8"/></svg>
<div style="left:1809px;top:862px;width:18px;height:19px;background:#f0f0f0;border-bottom:1px solid #696969;box-shadow:inset 0 -1px 0 #a0a0a0"></div>
<svg style="left:1810px;top:863px;" width="16" height="16" viewBox="0 0 16 16"><circle cx="7.500" cy="7" r="5" fill="none" stroke="#a0a0a0" stroke-width="1.400"/><path d="M11 11l3.500 3.500" stroke="#a0a0a0" stroke-width="2"/><path d="M9 5l1.500 2-2.500 .5M10 7c-1-2-4-2-4.500 0s1 3 2.500 2.500" stroke="#a0a0a0" fill="none" stroke-width=".8"/></svg>
<div style="left:1809px;top:881px;width:18px;height:20px;background:#f0f0f0"></div>
<svg style="left:1813px;top:887px;" width="14" height="14" viewBox="0 0 14 14"><path d="M1 13L13 1M5 13l8-8M9 13l4-4" stroke="#8a8a8a" stroke-width="1"/></svg>
<div style="left:622px;top:883px;width:1187px;height:18px;background-color:#fff;background-image:linear-gradient(45deg,#efefef 25%,transparent 25%,transparent 75%,#efefef 75%),linear-gradient(45deg,#efefef 25%,transparent 25%,transparent 75%,#efefef 75%);background-size:2px 2px;background-position:0 0,1px 1px"></div>
<div style="left:622px;top:883px;width:20px;height:17px;background:#f0f0f0;border:1px solid #9a9a9a;border-top-color:#fff;border-left-color:#fff;box-shadow:inset -1px -1px 0 #c8c8c8"></div>
<svg style="left:626px;top:886px;" width="12" height="12" viewBox="0 0 12 12"><g transform="rotate(-90 6 6)"><path d="M1 6h9" stroke="#7a7a7a" stroke-width="1"/><path d="M11 6l-3.500-2v4z" fill="#7a7a7a"/></g></svg>
<div style="left:642px;top:883px;width:20px;height:17px;background:#f0f0f0;border:1px solid #9a9a9a;border-top-color:#fff;border-left-color:#fff;box-shadow:inset -1px -1px 0 #c8c8c8"></div>
<svg style="left:646px;top:886px;" width="12" height="12" viewBox="0 0 12 12"><g transform="rotate(0 6 6)"><path d="M1 6h9" stroke="#7a7a7a" stroke-width="1"/><path d="M11 6l-3.500-2v4z" fill="#7a7a7a"/></g></svg>
<div style="left:662px;top:883px;width:20px;height:17px;background:#f0f0f0;border:1px solid #9a9a9a;border-top-color:#fff;border-left-color:#fff;box-shadow:inset -1px -1px 0 #c8c8c8"></div>
<svg style="left:666px;top:886px;" width="12" height="12" viewBox="0 0 12 12"><g transform="rotate(-20 6 6)"><path d="M1 6h9" stroke="#7a7a7a" stroke-width="1"/><path d="M11 6l-3.500-2v4z" fill="#7a7a7a"/></g></svg>
<div style="left:682px;top:883px;width:20px;height:17px;background:#f0f0f0;border:1px solid #9a9a9a;border-top-color:#fff;border-left-color:#fff;box-shadow:inset -1px -1px 0 #c8c8c8"></div>
<svg style="left:686px;top:886px;" width="12" height="12" viewBox="0 0 12 12"><g transform="rotate(-45 6 6)"><path d="M1 6h9" stroke="#7a7a7a" stroke-width="1"/><path d="M11 6l-3.500-2v4z" fill="#7a7a7a"/></g></svg>
<div style="left:702px;top:883px;width:20px;height:17px;background:#f0f0f0;border:1px solid #9a9a9a;border-top-color:#fff;border-left-color:#fff;box-shadow:inset -1px -1px 0 #c8c8c8"></div>
<svg style="left:706px;top:886px;" width="12" height="12" viewBox="0 0 12 12"><g transform="rotate(-65 6 6)"><path d="M1 6h9" stroke="#7a7a7a" stroke-width="1"/><path d="M11 6l-3.500-2v4z" fill="#7a7a7a"/></g></svg>
<div style="left:722px;top:883px;width:20px;height:17px;background:#f0f0f0;border:1px solid #9a9a9a;border-top-color:#fff;border-left-color:#fff;box-shadow:inset -1px -1px 0 #c8c8c8"></div>
<svg style="left:726px;top:886px;" width="12" height="12" viewBox="0 0 12 12"><g transform="rotate(-110 6 6)"><path d="M1 6h9" stroke="#7a7a7a" stroke-width="1"/><path d="M11 6l-3.500-2v4z" fill="#7a7a7a"/></g></svg>
<div style="left:742px;top:883px;width:20px;height:17px;background:#f0f0f0;border:1px solid #9a9a9a;border-top-color:#fff;border-left-color:#fff;box-shadow:inset -1px -1px 0 #c8c8c8"></div>
<svg style="left:746px;top:886px;" width="12" height="12" viewBox="0 0 12 12"><g transform="rotate(-135 6 6)"><path d="M1 6h9" stroke="#7a7a7a" stroke-width="1"/><path d="M11 6l-3.500-2v4z" fill="#7a7a7a"/></g></svg>
<div style="left:762px;top:883px;width:20px;height:17px;background:#f0f0f0;border:1px solid #9a9a9a;border-top-color:#fff;border-left-color:#fff;box-shadow:inset -1px -1px 0 #c8c8c8"></div>
<svg style="left:766px;top:886px;" width="12" height="12" viewBox="0 0 12 12"><g transform="rotate(-160 6 6)"><path d="M1 6h9" stroke="#7a7a7a" stroke-width="1"/><path d="M11 6l-3.500-2v4z" fill="#7a7a7a"/></g></svg>
<div style="left:782px;top:883px;width:17px;height:17px;background:#f0f0f0;border-top:1px solid #e3e3e3;border-left:1px solid #e3e3e3;border-right:1px solid #696969;border-bottom:1px solid #696969;box-shadow:inset -1px -1px 0 #a0a0a0,inset 1px 1px 0 #fff"></div>
<svg style="left:787px;top:888px;" width="4" height="7" viewBox="0 0 4 7"><path d="M4 0v7l-4-3.500z" fill="#000"/></svg>
<div style="left:1120px;top:883px;width:349px;height:17px;background:#f0f0f0;border-top:1px solid #e3e3e3;border-left:1px solid #e3e3e3;border-right:1px solid #696969;border-bottom:1px solid #696969;box-shadow:inset -1px -1px 0 #a0a0a0,inset 1px 1px 0 #fff"></div>
<div style="left:1792px;top:883px;width:17px;height:17px;background:#f0f0f0;border-top:1px solid #e3e3e3;border-left:1px solid #e3e3e3;border-right:1px solid #696969;border-bottom:1px solid #696969;box-shadow:inset -1px -1px 0 #a0a0a0,inset 1px 1px 0 #fff"></div>
<svg style="left:1798px;top:888px;" width="4" height="7" viewBox="0 0 4 7"><path d="M0 0v7l4-3.500z" fill="#000"/></svg></div>
<!-- sec_dialog -->
<div style="left:671px;top:216px;width:577px;height:430px;border-radius:7px 7px 3px 3px;border:1px solid #7c7c98;background:linear-gradient(180deg,#bcbccf 0,#a9a9bf 12px,#a8a8be 28px,#a4a4bb 60%,#9a9ab4 100%);box-shadow:inset 1px 1px 0 #d4d4e2,inset -1px -1px 0 #c4c4d6,1px 1px 2px rgba(60,60,90,.5)"></div>
<div style="left:677px;top:244px;width:565px;height:395px;background:#d6d6e2;border:1px solid #8c8ca6;box-shadow:inset 1px 1px 0 #e6e6ef"></div>
<svg style="left:679px;top:223px;" width="16" height="16" viewBox="0 0 16 16"><path d="M1 2l13 9.500h-13z" fill="#a8c838" stroke="#7a8a50" stroke-width="1.500"/><path d="M4 6.500l4 3h-4z" fill="#b0b0c4"/><rect x="1" y="1" width="13.500" height="10.500" fill="none" stroke="#8a8aa0" stroke-width="1"/><path d="M5 14h6M8 12v2" stroke="#8a8aa0" stroke-width="1.200"/></svg>
<span class="t" style="left:697px;top:223.5px;height:16px;line-height:16px;font-size:12px;color:#55555f;font-weight:bold;transform:scaleX(0.9934);text-shadow:0 0 3px #e0e0ec,0 0 2px #e0e0ec">STL Datei exportieren</span>
<div style="left:1208px;top:217px;width:33px;height:21px;border-radius:0 5px 3px 3px;border:1px solid #a86a78;background:linear-gradient(180deg,#e3a4ae 0,#d98792 45%,#cf6f7c 50%,#d98a94 100%);box-shadow:inset 0 0 0 1px rgba(255,255,255,.25)"></div>
<svg style="left:1219px;top:222px;" width="11" height="10" viewBox="0 0 11 10"><path d="M1.500 1.500l8 7M9.500 1.500l-8 7" stroke="#6a4a58" stroke-width="3.400" stroke-linecap="square"/><path d="M1.500 1.500l8 7M9.500 1.500l-8 7" stroke="#fff" stroke-width="2.200" stroke-linecap="square"/></svg>
<span class="t" style="left:708px;top:255.5px;height:15px;line-height:15px;font-size:11px;color:#0a0a14;transform:scaleX(0.9657);">Speichern in:</span>
<div style="left:778px;top:253px;width:258px;height:20px;background:#fff;border:1px solid #7e7e96;box-shadow:inset 1px 1px 0 #c8c8d4"></div><svg style="left:1022px;top:261px;" width="9" height="5" viewBox="0 0 9 5"><path d="M0 0h9l-4.5 5z" fill="#3a3a50"/></svg>
<svg style="left:786px;top:255px;" width="12" height="16" viewBox="0 0 12 16"><path d="M.5 .5h8l3 3v12h-11z" fill="#fff" stroke="#777"/><path d="M8.500 .5v3h3" fill="none" stroke="#777"/><path d="M2.500 5.500h7M2.500 7.500h7M2.500 9.500h3M2.500 11.500h3M2.500 13h7" stroke="#3a78c8" stroke-width="1"/><rect x="6" y="9" width="3.500" height="3" fill="#4a8a4a"/></svg>
<span class="t" style="left:803px;top:255.5px;height:15px;line-height:15px;font-size:11px;color:#0a0a14;transform:scaleX(0.9600);">Dokumente</span>
<svg style="left:1053px;top:255px;" width="16" height="16" viewBox="0 0 16 16"><circle cx="8" cy="8" r="7.300" fill="#7fa8dc" stroke="#9ab0d0"/><ellipse cx="8" cy="5" rx="5.500" ry="3.200" fill="#b8d0f0" opacity=".8"/><path d="M12 8H5.500M8 5L5 8l3 3" fill="none" stroke="#fff" stroke-width="1.800"/></svg>
<svg style="left:1075px;top:254px;" width="16" height="18" viewBox="0 0 16 18"><path d="M1 7h5l1 1h7v9h-13z" fill="#f0cf60" stroke="#c8a030"/><path d="M2 17l2-6h11l-2 6z" fill="#fae28c" stroke="#c8a030"/><path d="M7 14c2-2 3-5 3-9" fill="none" stroke="#18a028" stroke-width="2.400"/><path d="M6 6l4-5.500 4 5.500z" fill="#28b838" stroke="#108020" stroke-width=".6"/></svg>
<svg style="left:1099px;top:255px;" width="17" height="16" viewBox="0 0 17 16"><path d="M1 4h5l1 1h7v9h-13z" fill="#f0cf60" stroke="#c8a030"/><path d="M1.500 14l2.500-6h11l-2.500 6z" fill="#fae28c" stroke="#c8a030"/><circle cx="13" cy="3.500" r="2.600" fill="#f06020"/><path d="M13 0v7M9.500 3.500h7M10.500 1l5 5M15.500 1l-5 5" stroke="#f08030" stroke-width=".9"/><circle cx="13" cy="3.500" r="1.200" fill="#ffe890"/></svg>
<svg style="left:1122px;top:256px;" width="15" height="14" viewBox="0 0 15 14"><rect x=".7" y=".7" width="13.600" height="12.600" rx="1" fill="#fff" stroke="#2060d0" stroke-width="1.400"/><rect x=".7" y=".7" width="13.600" height="2.300" fill="#2060d0"/><rect x="3" y="4.500" width="2" height="2" fill="#7890d0"/><rect x="6.500" y="4.500" width="2" height="2" fill="#2060d0"/><rect x="10" y="4.500" width="2" height="2" fill="#20a020"/><rect x="3" y="8.500" width="2" height="2" fill="#e06030"/><rect x="6.500" y="8.500" width="2" height="2" fill="#102080"/><rect x="10" y="8.500" width="2" height="2" fill="#d0a020"/></svg>
<svg style="left:1140px;top:261px;" width="6" height="3" viewBox="0 0 6 3"><path d="M0 0h6l-3.0 3z" fill="#6a6a80"/></svg>
<svg style="left:712px;top:285px;" width="30" height="28" viewBox="0 0 30 28"><path d="M16.500 1.500l3.200 8.300 8.800.5-6.900 5.500 2.400 8.600-7.500-4.900-7.500 4.900 2.400-8.600-3.500-2.800z" fill="#2ea0f4" stroke="#1e88e0" stroke-width=".6" transform="rotate(8 15 13)"/><path d="M2 6.500h9M0 11.500h8M2 17h6" stroke="#7ec4f8" stroke-width="1.300" opacity=".9"/></svg>
<span class="t" style="left:694px;top:320.5px;height:15px;line-height:15px;font-size:11px;color:#0a0a14;transform:scaleX(0.9874);">Schnellzugriff</span>
<svg style="left:712px;top:345px;" width="30" height="28" viewBox="0 0 30 28"><rect x="1" y="3" width="28" height="20" fill="#1696f0"/><path d="M1 23L18 3h11v6L15 23z" fill="#34aaf8" opacity=".55"/><path d="M2 21.500h22M25 21.500h1M27 21.500h1" stroke="#d8f0ff" stroke-width="1"/></svg>
<span class="t" style="left:707px;top:380.5px;height:15px;line-height:15px;font-size:11px;color:#0a0a14;transform:scaleX(0.9665);">Desktop</span>
<svg style="left:712px;top:405px;" width="30" height="28" viewBox="0 0 30 28"><path d="M1 2h11l2 2.500h15v19h-28z" fill="#f8c83c"/><path d="M1 2h11l2 2.500h-13z" fill="#e8a820"/><rect x="1" y="5" width="28" height="18.500" fill="#fcd45c"/><path d="M6.500 23.500v-8c0-1 .5-1.500 1.500-1.500h14c1 0 1.500.5 1.500 1.500v8h-5v-5h-7v5z" fill="#2a8ce8"/></svg>
<span class="t" style="left:698px;top:440.5px;height:15px;line-height:15px;font-size:11px;color:#0a0a14;transform:scaleX(0.9511);">Bibliotheken</span>
<svg style="left:712px;top:465px;" width="30" height="28" viewBox="0 0 30 28"><path d="M-1 20.800l16.700-3.300 11.600 3.300-15.800 5z" fill="#e9edf2" stroke="#c4cad4" stroke-width=".6"/><path d="M3 21l12.500-2.500M6 22.300l12.500-2.800M9 23.600l13-3.300M8 19.800l9 4.500M12.500 19l9 3.500" stroke="#bcc4d0" stroke-width=".6" fill="none"/><path d="M18 17l5 1.500v2l-5-1.500z" fill="#d0d6de"/><path d="M9 .8l20 5.900v11.600l-19.200-5z" fill="#3fb0f6"/><path d="M9 .8l20 5.900v4l-20-7z" fill="#6cc6fa" opacity=".7"/></svg>
<span class="t" style="left:703px;top:500.5px;height:15px;line-height:15px;font-size:11px;color:#0a0a14;transform:scaleX(0.9377);">Dieser PC</span>
<svg style="left:712px;top:525px;" width="30" height="28" viewBox="0 0 30 28"><circle cx="19" cy="9" r="9.500" fill="#4a8fb4"/><path d="M12 5c2-2 5-3 7-2 0 2-2 2-3 4s-3 1-4 3c-1-1-1-3 0-5zM21 2c3 1 5 3 6 6-2 0-2-2-4-2s-1-3-2-4zM22 11c2-1 4 0 5 1-1 3-3 5-6 6 0-3 2-4 1-7z" fill="#b4dcea"/><ellipse cx="16" cy="4.500" rx="5" ry="2.500" fill="#fff" opacity=".25"/><path d="M8 24.500l5-1.500 5 1.800-5 1.500z" fill="#dde2ea"/><path d="M11 21.500h3v3h-3z" fill="#c8d0da"/><path d="M2.300 7.500l18.400 5.800v10l-18.400-5z" fill="#35a8f4"/><path d="M2.300 7.500l18.400 5.800v3l-18.400-5.500z" fill="#66c2fa" opacity=".7"/></svg>
<span class="t" style="left:704px;top:560.5px;height:15px;line-height:15px;font-size:11px;color:#0a0a14;transform:scaleX(0.9816);">Netzwerk</span>
<div style="left:777px;top:282px;width:450px;height:263px;background:#fff"></div>
<div style="left:777px;top:282px;width:433px;height:22px;background:linear-gradient(180deg,#ebebf2,#dedee8);border-bottom:1px solid #c6c6d4"></div>
<div style="left:1048px;top:282px;width:1px;height:22px;background:#b8b8cc"></div>
<div style="left:1049px;top:282px;width:1px;height:22px;background:#f4f4f8"></div>
<div style="left:1048px;top:304px;width:1px;height:241px;background:#e4ecf8"></div>
<div style="left:1128px;top:282px;width:1px;height:22px;background:#b8b8cc"></div>
<div style="left:1129px;top:282px;width:1px;height:22px;background:#f4f4f8"></div>
<div style="left:1128px;top:304px;width:1px;height:241px;background:#e4ecf8"></div>
<span class="t" style="left:780px;top:285.5px;height:15px;line-height:15px;font-size:11px;color:#0a0a14;transform:scaleX(0.9202);">Name</span>
<span class="t" style="left:1052px;top:285.5px;height:15px;line-height:15px;font-size:11px;color:#0a0a14;transform:scaleX(0.9941);">Status</span>
<div style="left:1133px;top:284px;width:77px;height:18px;overflow:hidden"><span class="t" style="left:0px;top:1.5px;height:15px;line-height:15px;font-size:11px;color:#0a0a14;transform:scaleX(1.0027);">Änderungsdatum</span></div>
<div style="left:781px;top:514px;width:429px;height:19px;background:#d9d9d9"></div>
<svg style="left:787px;top:305.5px;" width="13" height="16" viewBox="0 0 13 16"><path d="M.5 .5h11.500v15h-11.500z" fill="#fbe08a" stroke="#f0c850" stroke-width="1"/><path d="M1 1h9.500v14h-9.500z" fill="#fce69c"/><path d="M10.500 15.500v-6l2-1v7z" fill="#fbe08a" stroke="#eec248" stroke-width=".8"/></svg>
<span class="t" style="left:803px;top:306.5px;height:16px;line-height:16px;font-size:12px;color:#0a0a14;transform:scaleX(1.0059);">ArCoMora</span>
<div style="left:1135px;top:305.5px;width:75px;height:18px;overflow:hidden"><span class="t" style="left:0px;top:1.0px;height:16px;line-height:16px;font-size:12px;color:#0a0a14;transform:scaleX(0.8761);">15.02.2020 21:4</span></div>
<svg style="left:787px;top:324.5px;" width="13" height="16" viewBox="0 0 13 16"><path d="M.5 .5h11.500v15h-11.500z" fill="#fbe08a" stroke="#f0c850" stroke-width="1"/><path d="M1 1h9.500v14h-9.500z" fill="#fce69c"/><path d="M10.500 15.500v-6l2-1v7z" fill="#fbe08a" stroke="#eec248" stroke-width=".8"/></svg>
<span class="t" style="left:803px;top:325.5px;height:16px;line-height:16px;font-size:12px;color:#0a0a14;transform:scaleX(0.9933);">Benutzerdefinierte Office-Vorlagen</span>
<div style="left:1135px;top:324.5px;width:75px;height:18px;overflow:hidden"><span class="t" style="left:0px;top:1.0px;height:16px;line-height:16px;font-size:12px;color:#0a0a14;transform:scaleX(0.8761);">14.12.2019 09:2</span></div>
<svg style="left:787px;top:343.5px;" width="13" height="16" viewBox="0 0 13 16"><path d="M.5 .5h11.500v15h-11.500z" fill="#fbe08a" stroke="#f0c850" stroke-width="1"/><path d="M1 1h9.500v14h-9.500z" fill="#fce69c"/><path d="M10.500 15.500v-6l2-1v7z" fill="#fbe08a" stroke="#eec248" stroke-width=".8"/></svg>
<span class="t" style="left:803px;top:344.5px;height:16px;line-height:16px;font-size:12px;color:#0a0a14;transform:scaleX(0.9915);">DC Toolkit</span>
<div style="left:1135px;top:343.5px;width:75px;height:18px;overflow:hidden"><span class="t" style="left:0px;top:1.0px;height:16px;line-height:16px;font-size:12px;color:#0a0a14;transform:scaleX(0.8761);">26.12.2019 19:2</span></div>
<svg style="left:787px;top:362.5px;" width="13" height="16" viewBox="0 0 13 16"><path d="M.5 .5h11.500v15h-11.500z" fill="#fbe08a" stroke="#f0c850" stroke-width="1"/><path d="M1 1h9.500v14h-9.500z" fill="#fce69c"/><path d="M10.500 15.500v-6l2-1v7z" fill="#fbe08a" stroke="#eec248" stroke-width=".8"/></svg>
<span class="t" style="left:803px;top:363.5px;height:16px;line-height:16px;font-size:12px;color:#0a0a14;transform:scaleX(0.9593);">DesignCAD 3D MAX 2018 64-bit</span>
<div style="left:1135px;top:362.5px;width:75px;height:18px;overflow:hidden"><span class="t" style="left:0px;top:1.0px;height:16px;line-height:16px;font-size:12px;color:#0a0a14;transform:scaleX(0.8761);">20.02.2020 10:4</span></div>
<svg style="left:787px;top:381.5px;" width="13" height="16" viewBox="0 0 13 16"><path d="M.5 .5h11.500v15h-11.500z" fill="#fbe08a" stroke="#f0c850" stroke-width="1"/><path d="M1 1h9.500v14h-9.500z" fill="#fce69c"/><path d="M10.500 15.500v-6l2-1v7z" fill="#fbe08a" stroke="#eec248" stroke-width=".8"/></svg>
<span class="t" style="left:803px;top:382.5px;height:16px;line-height:16px;font-size:12px;color:#0a0a14;transform:scaleX(0.9938);">Downloads</span>
<div style="left:1135px;top:381.5px;width:75px;height:18px;overflow:hidden"><span class="t" style="left:0px;top:1.0px;height:16px;line-height:16px;font-size:12px;color:#0a0a14;transform:scaleX(0.8761);">23.01.2020 18:1</span></div>
<svg style="left:787px;top:400.5px;" width="13" height="16" viewBox="0 0 13 16"><path d="M.5 .5h11.500v15h-11.500z" fill="#fbe08a" stroke="#f0c850" stroke-width="1"/><path d="M1 1h9.500v14h-9.500z" fill="#fce69c"/><path d="M10.500 15.500v-6l2-1v7z" fill="#fbe08a" stroke="#eec248" stroke-width=".8"/></svg>
<span class="t" style="left:803px;top:401.5px;height:16px;line-height:16px;font-size:12px;color:#0a0a14;transform:scaleX(1.0246);">Modelbau</span>
<div style="left:1135px;top:400.5px;width:75px;height:18px;overflow:hidden"><span class="t" style="left:0px;top:1.0px;height:16px;line-height:16px;font-size:12px;color:#0a0a14;transform:scaleX(0.8761);">15.02.2020 22:0</span></div>
<svg style="left:787px;top:419.5px;" width="13" height="16" viewBox="0 0 13 16"><path d="M.5 .5h11.500v15h-11.500z" fill="#fbe08a" stroke="#f0c850" stroke-width="1"/><path d="M1 1h9.500v14h-9.500z" fill="#fce69c"/><path d="M10.500 15.500v-6l2-1v7z" fill="#fbe08a" stroke="#eec248" stroke-width=".8"/></svg>
<span class="t" style="left:803px;top:420.5px;height:16px;line-height:16px;font-size:12px;color:#0a0a14;transform:scaleX(1.0148);">Outlook-Dateien</span>
<div style="left:1135px;top:419.5px;width:75px;height:18px;overflow:hidden"><span class="t" style="left:0px;top:1.0px;height:16px;line-height:16px;font-size:12px;color:#0a0a14;transform:scaleX(0.8852);">20.02.2020 11:1</span></div>
<svg style="left:787px;top:438.5px;" width="13" height="16" viewBox="0 0 13 16"><path d="M.5 .5h11.500v15h-11.500z" fill="#fbe08a" stroke="#f0c850" stroke-width="1"/><path d="M1 1h9.500v14h-9.500z" fill="#fce69c"/><path d="M10.500 15.500v-6l2-1v7z" fill="#fbe08a" stroke="#eec248" stroke-width=".8"/></svg>
<span class="t" style="left:803px;top:439.5px;height:16px;line-height:16px;font-size:12px;color:#0a0a14;transform:scaleX(0.9906);">Railroad &amp; Co</span>
<div style="left:1135px;top:438.5px;width:75px;height:18px;overflow:hidden"><span class="t" style="left:0px;top:1.0px;height:16px;line-height:16px;font-size:12px;color:#0a0a14;transform:scaleX(0.8761);">14.02.2020 20:4</span></div>
<svg style="left:787px;top:457.5px;" width="13" height="16" viewBox="0 0 13 16"><path d="M.5 .5h11.500v15h-11.500z" fill="#fbe08a" stroke="#f0c850" stroke-width="1"/><path d="M1 1h9.500v14h-9.500z" fill="#fce69c"/><path d="M10.500 15.500v-6l2-1v7z" fill="#fbe08a" stroke="#eec248" stroke-width=".8"/></svg>
<span class="t" style="left:803px;top:458.5px;height:16px;line-height:16px;font-size:12px;color:#0a0a14;transform:scaleX(0.9641);">Rocrail</span>
<div style="left:1135px;top:457.5px;width:75px;height:18px;overflow:hidden"><span class="t" style="left:0px;top:1.0px;height:16px;line-height:16px;font-size:12px;color:#0a0a14;transform:scaleX(0.8761);">16.02.2020 22:0</span></div>
<svg style="left:787px;top:476.5px;" width="13" height="16" viewBox="0 0 13 16"><path d="M.5 .5h11.500v15h-11.500z" fill="#fbe08a" stroke="#f0c850" stroke-width="1"/><path d="M1 1h9.500v14h-9.500z" fill="#fce69c"/><path d="M10.500 15.500v-6l2-1v7z" fill="#fbe08a" stroke="#eec248" stroke-width=".8"/></svg>
<span class="t" style="left:803px;top:477.5px;height:16px;line-height:16px;font-size:12px;color:#0a0a14;transform:scaleX(0.9858);">samsung</span>
<div style="left:1135px;top:476.5px;width:75px;height:18px;overflow:hidden"><span class="t" style="left:0px;top:1.0px;height:16px;line-height:16px;font-size:12px;color:#0a0a14;transform:scaleX(0.8761);">04.01.2020 13:0</span></div>
<svg style="left:785px;top:496.5px;" width="16" height="16" viewBox="0 0 16 16"><rect x=".7" y="2.700" width="14.600" height="12.600" fill="#fff" stroke="#000" stroke-width="1.400"/><path d="M5.500 .5v15" stroke="#000" stroke-width="1.200"/><path d="M2.500 6v1.500M2.500 9v4" stroke="#000" stroke-width="1"/><path d="M10.500 6l3.500 7h-7z" fill="none" stroke="#000" stroke-width="1.300"/><path d="M10.500 10l1.500 3h-3z" fill="#000"/></svg>
<span class="t" style="left:803px;top:496.5px;height:16px;line-height:16px;font-size:12px;color:#0a0a14;transform:scaleX(0.9931);">Servo-Halterung.stl</span>
<div style="left:1135px;top:495.5px;width:75px;height:18px;overflow:hidden"><span class="t" style="left:0px;top:1.0px;height:16px;line-height:16px;font-size:12px;color:#0a0a14;transform:scaleX(0.8761);">17.02.2020 19:2</span></div>
<svg style="left:785px;top:515.5px;" width="16" height="16" viewBox="0 0 16 16"><rect x=".7" y="2.700" width="14.600" height="12.600" fill="#fff" stroke="#000" stroke-width="1.400"/><path d="M5.500 .5v15" stroke="#000" stroke-width="1.200"/><path d="M2.500 6v1.500M2.500 9v4" stroke="#000" stroke-width="1"/><path d="M10.500 6l3.500 7h-7z" fill="none" stroke="#000" stroke-width="1.300"/><path d="M10.500 10l1.500 3h-3z" fill="#000"/></svg>
<span class="t" style="left:803px;top:515.5px;height:16px;line-height:16px;font-size:12px;color:#0a0a14;transform:scaleX(0.9775);">Servo-Halterung.V2.stl</span>
<div style="left:1135px;top:514.5px;width:75px;height:18px;overflow:hidden"><span class="t" style="left:0px;top:1.0px;height:16px;line-height:16px;font-size:12px;color:#0a0a14;transform:scaleX(0.8761);">19.02.2020 15:2</span></div>
<div style="left:1210px;top:282px;width:17px;height:263px;background:#a4a4bc"></div>
<div style="left:1210px;top:282px;width:17px;height:17px;background:#b4b4c8;border-bottom:1px solid #c8c8d8"></div>
<svg style="left:1214px;top:288px;" width="9" height="5" viewBox="0 0 9 5"><path d="M0 5h9l-4.500-5z" fill="#4a4a68"/></svg>
<div style="left:1210px;top:528px;width:17px;height:17px;background:#b4b4c8;border-top:1px solid #c8c8d8"></div>
<svg style="left:1214px;top:534px;" width="9" height="5" viewBox="0 0 9 5"><path d="M0 0h9l-4.500 5z" fill="#4a4a68"/></svg>
<div style="left:1210px;top:299px;width:17px;height:224px;background:linear-gradient(90deg,#8e8eac,#9c9cb8 50%,#a8a8c0)"></div>
<div style="left:1215px;top:409px;width:7px;height:1px;background:#d0d0e0"></div>
<div style="left:1215px;top:412px;width:7px;height:1px;background:#d0d0e0"></div>
<div style="left:777px;top:545px;width:433px;height:17px;background:#d2d2de"></div>
<div style="left:777px;top:545px;width:17px;height:17px;background:#b0b0c6"></div>
<svg style="left:782px;top:549px;" width="5" height="9" viewBox="0 0 5 9"><path d="M5 0v9l-5-4.500z" fill="#4a4a68"/></svg>
<div style="left:1193px;top:545px;width:17px;height:17px;background:#b0b0c6"></div>
<svg style="left:1199px;top:549px;" width="5" height="9" viewBox="0 0 5 9"><path d="M0 0v9l5-4.500z" fill="#4a4a68"/></svg>
<div style="left:794px;top:545px;width:249px;height:17px;background:linear-gradient(180deg,#9a9ab6,#a8a8c2)"></div>
<div style="left:915px;top:550px;width:1px;height:7px;background:#d0d0e0"></div>
<div style="left:918px;top:550px;width:1px;height:7px;background:#d0d0e0"></div>
<div style="left:816px;top:352px;width:32px;height:28px;border-radius:6px 6px 0 0;background:linear-gradient(180deg,#9c9cb4,#8c8ca6 50%,#8a8aa4)"></div>
<div style="left:816px;top:379px;width:7px;height:26px;border-radius:0 0 0 4px;background:linear-gradient(90deg,#9494ae,#8888a2)"></div>
<div style="left:823px;top:380px;width:25px;height:25px;background:#fff"></div>
<svg style="left:838px;top:392px;" width="11" height="13" viewBox="0 0 11 13"><path d="M9.500 0L10 11 3.500 13z" fill="#fcc620"/></svg>
<span class="t" style="left:779px;top:574.5px;height:15px;line-height:15px;font-size:11px;color:#0a0a14;transform:scaleX(0.9600);">Dateiname:</span>
<div style="left:874px;top:572px;width:244px;height:20px;background:#fff;border:1px solid #7e7e96;box-shadow:inset 1px 1px 0 #c8c8d4"></div><svg style="left:1104px;top:580px;" width="9" height="5" viewBox="0 0 9 5"><path d="M0 0h9l-4.5 5z" fill="#3a3a50"/></svg>
<span class="t" style="left:877px;top:575.0px;height:15px;line-height:15px;font-size:11px;color:#0a0a14;transform:scaleX(0.9579);">Servo-Halterung.V2.stl</span>
<span class="t" style="left:779px;top:601.5px;height:15px;line-height:15px;font-size:11px;color:#0a0a14;transform:scaleX(0.9676);">Dateityp:</span>
<div style="left:874px;top:600px;width:244px;height:19px;background:#fff;border:1px solid #7e7e96;box-shadow:inset 1px 1px 0 #c8c8d4"></div><svg style="left:1104px;top:607px;" width="9" height="5" viewBox="0 0 9 5"><path d="M0 0h9l-4.5 5z" fill="#3a3a50"/></svg>
<span class="t" style="left:877px;top:602.0px;height:15px;line-height:15px;font-size:11px;color:#0a0a14;transform:scaleX(0.9458);">STL-Datei (*.stl)</span>
<div style="left:1152px;top:571px;width:75px;height:23px;border:1px solid #8e8ea6;border-radius:4px;background:linear-gradient(180deg,#ececf3,#dedee8 50%,#d2d2de);box-shadow:inset 0 0 0 1px #f6f6fa"></div><span class="t" style="left:1166.0px;top:575.5px;height:15px;line-height:15px;font-size:11px;color:#0a0a14;transform:scaleX(0.9489);">Speichern</span>
<div style="left:1152px;top:599px;width:75px;height:23px;border:1px solid #8e8ea6;border-radius:4px;background:linear-gradient(180deg,#ececf3,#dedee8 50%,#d2d2de);box-shadow:inset 0 0 0 1px #f6f6fa"></div><span class="t" style="left:1163.5px;top:603.5px;height:15px;line-height:15px;font-size:11px;color:#0a0a14;transform:scaleX(0.9774);">Abbrechen</span>
<svg style="left:1227px;top:627px;" width="12" height="12" viewBox="0 0 12 12"><path d="M1 11L11 1M5 11l6-6M9 11l2-2" stroke="#8a8aa0" stroke-width="1"/><path d="M2 11L11 2M6 11l5-5M10 11l1-1" stroke="#f4f4fa" stroke-width=".8"/></svg>
<!-- sec_taskbar -->
<div style="left:0px;top:1040px;width:1920px;height:40px;background:#1c2039"></div>
<svg style="left:15px;top:1051px;" width="18" height="18" viewBox="0 0 18 18"><path d="M0 2.600l7.300-1v6.900h-7.300zM8.200 1.500l9.800-1.400v8.400h-9.800zM0 9.400h7.300v6.900l-7.300-1zM8.200 9.400h9.800v8.400l-9.800-1.400z" fill="#fff"/></svg>
<div style="left:48px;top:1041px;width:344px;height:39px;background:#f0f0f0"></div>
<svg style="left:59px;top:1051px;" width="18" height="18" viewBox="0 0 18 18"><circle cx="10.500" cy="6.500" r="5.300" fill="none" stroke="#222" stroke-width="1.400"/><path d="M6.800 10.500L1 16.500" stroke="#222" stroke-width="1.600"/></svg>
<span class="t" style="left:88px;top:1050.5px;height:19px;line-height:19px;font-size:15px;color:#2a2a2a;transform:scaleX(0.9710);">Zur Suche Text hier eingeben</span>
<svg style="left:407px;top:1051px;" width="18" height="18" viewBox="0 0 18 18"><rect x="1" y="4.500" width="9.500" height="9" fill="none" stroke="#fff" stroke-width="1.300"/><path d="M1 1.500h9.500M1 16.500h9.500" stroke="#fff" stroke-width="1.300"/><path d="M14 1v3M14 6.500v5M14 14v3" stroke="#fff" stroke-width="1.500"/><path d="M11 9h3" stroke="#fff" stroke-width="1.200"/></svg>
<svg style="left:456px;top:1049px;" width="22" height="22" viewBox="0 0 22 22"><path d="M1.500 10C2.500 4 7 1 11.500 1c6 0 9 4.500 9 9.500v2h-13c.3 3 3 4.500 6 4.500 2.500 0 4.500-.8 6-1.800v4.300c-2 1.200-4.500 1.800-7 1.800-6 0-10-3.800-10-9.500 0-4 2.500-7 6-8.500-2 1.500-3 3.300-3.300 5.300h9.300c0-2.800-1.500-4.600-4.300-4.600-3 0-6 2-8.700 6z" fill="#1e90e8"/></svg>
<svg style="left:503px;top:1049px;" width="24" height="22" viewBox="0 0 24 22"><path d="M1 2h9l2 2.500h11v17h-22z" fill="#f8c83c"/><path d="M1 2h9l2 2.500h-11z" fill="#e8a820"/><rect x="1" y="5" width="22" height="16" fill="#fcd45c"/><path d="M5.500 21v-7c0-1 .5-1.500 1.500-1.500h10c1 0 1.500.5 1.500 1.500v7h-4v-4.500h-5v4.500z" fill="#2a8ce8"/></svg>
<svg style="left:553px;top:1047px;" width="23" height="25" viewBox="0 0 23 25"><path d="M7 8V5.500c0-2.500 2-4 4.500-4s4.500 1.500 4.500 4V8" fill="none" stroke="#fff" stroke-width="1.600"/><rect x="1" y="7.500" width="21" height="16.500" fill="#fff"/><rect x="7" y="11" width="4" height="4" fill="#f25022"/><rect x="12" y="11" width="4" height="4" fill="#7fba00"/><rect x="7" y="16" width="4" height="4" fill="#00a4ef"/><rect x="12" y="16" width="4" height="4" fill="#ffb900"/></svg>
<svg style="left:601px;top:1050px;" width="25" height="20" viewBox="0 0 25 20"><path d="M1 7.500L12.500 1 24 7.500v11.500h-23z" fill="#fff"/><path d="M1 7.500l11.500 6.500L24 7.500" fill="none" stroke="#1c2039" stroke-width="1.600"/><path d="M1 19l9-8M24 19l-9-8" stroke="#1c2039" stroke-width="0"/></svg>
<svg style="left:651px;top:1048px;" width="24" height="24" viewBox="0 0 24 24"><ellipse cx="12" cy="12" rx="11" ry="11.500" fill="#e8101c"/><ellipse cx="12" cy="12" rx="4.800" ry="8.300" fill="#1c2039"/><path d="M16 3c4 2 5.500 5.500 5.500 9s-1.500 7-5.500 9" fill="none" stroke="#a80010" stroke-width="1.500" opacity=".6"/></svg>
<svg style="left:700px;top:1048px;" width="25" height="25" viewBox="0 0 25 25"><circle cx="12.500" cy="12.500" r="12" fill="#d8141c"/><ellipse cx="10" cy="7" rx="7" ry="4" fill="#f07078" opacity=".55"/><text x="12.500" y="17" font-size="13" font-weight="bold" font-family="Liberation Serif,serif" text-anchor="middle" fill="#2828c8" textLength="19" lengthAdjust="spacingAndGlyphs">DC</text><text x="12.500" y="15" font-size="6" font-family="Liberation Serif,serif" text-anchor="middle" fill="#fff">2018</text></svg>
<svg style="left:749px;top:1048px;" width="24" height="24" viewBox="0 0 24 24"><circle cx="12" cy="12" r="11.500" fill="#e8392c"/><path d="M12 12L2.040 17.750A11.500 11.500 0 0 0 12 23.500z" fill="#2da94f"/><path d="M2.040 17.750A11.500 11.500 0 0 1 2.040 6.250L12 12z" fill="#2da94f"/><path d="M2.040 6.250A11.500 11.500 0 0 1 21.960 6.250L12 12z" fill="#e8392c"/><path d="M21.960 6.250A11.500 11.500 0 0 1 12 23.500L12 12z" fill="#fdd23e"/><path d="M12 23.500A11.500 11.500 0 0 1 6 21.800L12 12z" fill="#2da94f"/><circle cx="12" cy="12" r="5.300" fill="#fff"/><circle cx="12" cy="12" r="4.200" fill="#4a8af4"/></svg>
<div style="left:642px;top:1078px;width:41px;height:2px;background:#84b8e8"></div>
<div style="left:691px;top:1078px;width:41px;height:2px;background:#84b8e8"></div>
<div style="left:740px;top:1078px;width:41px;height:2px;background:#84b8e8"></div>
<svg style="left:1698px;top:1054px;" width="14" height="10" viewBox="0 0 14 10"><path d="M1 8.500l6-6 6 6" fill="none" stroke="#fff" stroke-width="1.500"/></svg>
<svg style="left:1720px;top:1051px;" width="18" height="18" viewBox="0 0 18 18"><rect x="4.500" y="2.500" width="12" height="8.500" fill="none" stroke="#fff" stroke-width="1.200"/><path d="M10.500 11v3M6 15.500h9" stroke="#fff" stroke-width="1.200"/><rect x="1" y="1" width="4.500" height="6" fill="#1c2039" stroke="#fff" stroke-width="1.100"/></svg>
<svg style="left:1744px;top:1052px;" width="18" height="16" viewBox="0 0 18 16"><path d="M1 5.500h3l4-4v13l-4-4h-3z" fill="none" stroke="#fff" stroke-width="1.200"/><path d="M10.500 5c1 1 1 5 0 6M13 3c2 2.500 2 7.500 0 10" fill="none" stroke="#fff" stroke-width="1.100"/><path d="M15.500 1.500c2.500 3.500 2.500 9.500 0 13" fill="none" stroke="#9aa" stroke-width="1"/></svg>
<span class="t" style="left:1772px;top:1052.0px;height:16px;line-height:16px;font-size:12px;color:#fff;transform:scaleX(0.8683);">DEU</span>
<span class="t" style="left:1820px;top:1043.0px;height:16px;line-height:16px;font-size:12px;color:#fff;transform:scaleX(0.9266);">11:30</span>
<span class="t" style="left:1807px;top:1061.0px;height:16px;line-height:16px;font-size:12px;color:#fff;transform:scaleX(0.8991);">20.02.2020</span>
<svg style="left:1878px;top:1050px;" width="26" height="24" viewBox="0 0 26 24"><path d="M2.500 1.500h15v11h-6l-3 3v-3h-6z" fill="#fff"/><path d="M5 4.500h10M5 7h10M5 9.500h10" stroke="#1c2039" stroke-width="1"/><circle cx="16.500" cy="16" r="7.500" fill="#3c3c46" stroke="#5a5a64" stroke-width="1"/><text x="16.500" y="20" font-size="11" font-weight="bold" font-family="Liberation Sans,sans-serif" fill="#fff" text-anchor="middle" textLength="12" lengthAdjust="spacingAndGlyphs">22</text></svg>
<div style="left:1915px;top:1040px;width:1px;height:40px;background:#7a8090"></div>
</body></html>
